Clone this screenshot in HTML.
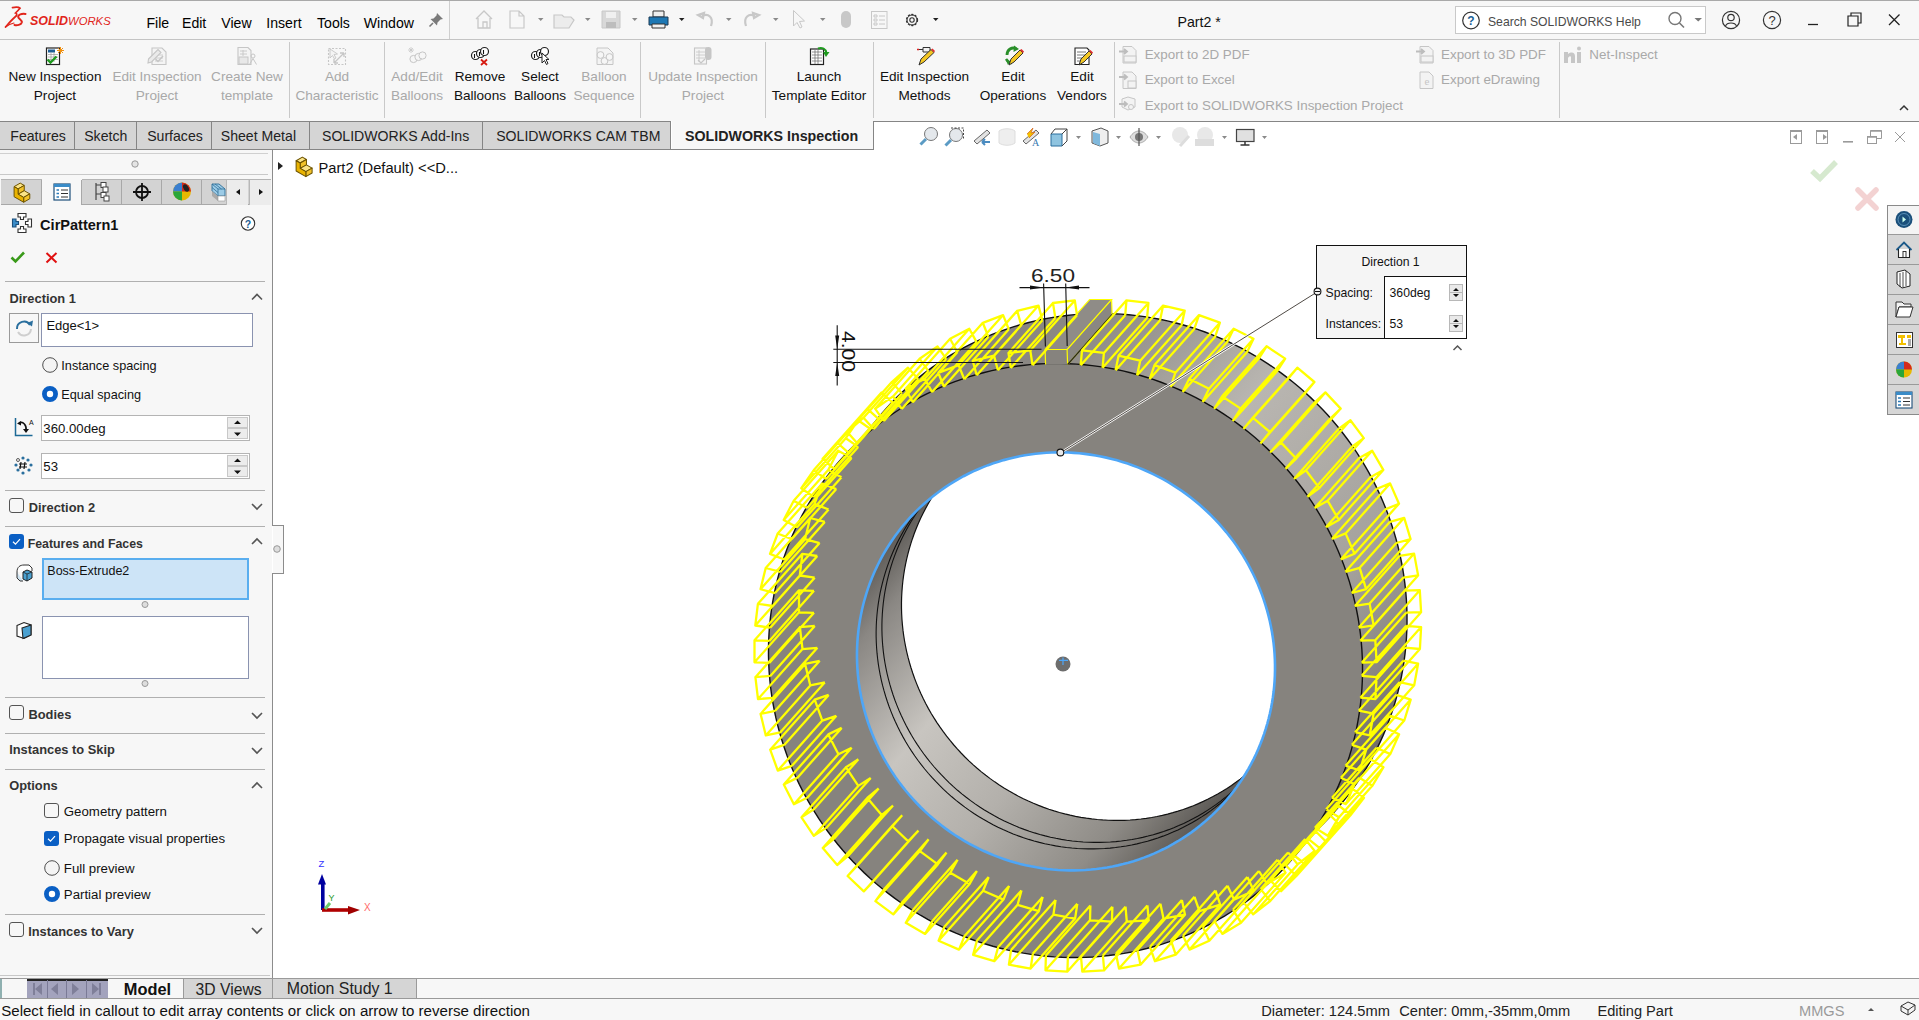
<!DOCTYPE html>
<html><head><meta charset="utf-8"><style>
html,body{margin:0;padding:0;}
body{width:1919px;height:1020px;overflow:hidden;position:relative;background:#fff;font-family:"Liberation Sans",sans-serif;}
.a{position:absolute;}
.t{position:absolute;white-space:nowrap;line-height:1;}
svg{display:block;}
</style></head><body>
<svg class="a" style="left:0;top:0" width="1919" height="1020" viewBox="0 0 1919 1020">
<defs>
<linearGradient id="gside" gradientUnits="userSpaceOnUse" x1="890" y1="413" x2="1332" y2="808"><stop offset="0" stop-color="#858280"/><stop offset="0.15" stop-color="#8c8984"/><stop offset="0.44" stop-color="#b9b6b1"/><stop offset="0.75" stop-color="#a5a29d"/><stop offset="0.9" stop-color="#8a8783"/><stop offset="1" stop-color="#6e6b67"/></linearGradient>
<linearGradient id="gin" gradientUnits="userSpaceOnUse" x1="925" y1="500" x2="1245" y2="770"><stop offset="0" stop-color="#5f5c58"/><stop offset="0.1" stop-color="#8a8783"/><stop offset="0.35" stop-color="#c8c5c0"/><stop offset="0.6" stop-color="#b3b0ab"/><stop offset="0.85" stop-color="#8f8c87"/><stop offset="1" stop-color="#5e5b57"/></linearGradient>

<clipPath id="inFrontInner"><path d="M1275.00,664.53 L1275.01,670.00 L1274.88,675.47 L1274.60,680.92 L1274.18,686.36 L1273.62,691.79 L1272.92,697.19 L1272.07,702.57 L1271.08,707.92 L1269.96,713.24 L1268.69,718.52 L1267.28,723.77 L1265.74,728.97 L1264.06,734.12 L1262.24,739.23 L1260.29,744.28 L1258.21,749.27 L1255.99,754.21 L1253.64,759.08 L1251.17,763.88 L1248.57,768.61 L1245.84,773.28 L1242.99,777.86 L1240.02,782.36 L1236.93,786.78 L1233.72,791.12 L1230.40,795.36 L1226.96,799.52 L1223.41,803.58 L1219.76,807.54 L1216.00,811.40 L1212.14,815.16 L1208.18,818.81 L1204.12,822.36 L1199.96,825.80 L1195.72,829.12 L1191.38,832.33 L1186.96,835.42 L1182.46,838.39 L1177.88,841.24 L1173.21,843.97 L1168.48,846.57 L1163.68,849.04 L1158.81,851.39 L1153.87,853.61 L1148.88,855.69 L1143.83,857.64 L1138.72,859.46 L1133.57,861.14 L1128.37,862.68 L1123.12,864.09 L1117.84,865.36 L1112.52,866.48 L1107.17,867.47 L1101.79,868.32 L1096.39,869.02 L1090.96,869.58 L1085.52,870.00 L1080.07,870.28 L1074.60,870.41 L1069.13,870.40 L1063.66,870.25 L1058.19,869.95 L1052.73,869.51 L1047.27,868.93 L1041.83,868.20 L1036.40,867.34 L1031.00,866.33 L1025.61,865.18 L1020.26,863.89 L1014.93,862.47 L1009.65,860.90 L1004.40,859.20 L999.19,857.37 L994.03,855.39 L988.92,853.29 L983.86,851.06 L978.85,848.69 L973.91,846.20 L969.03,843.58 L964.21,840.83 L959.47,837.96 L954.80,834.97 L950.20,831.87 L945.69,828.64 L941.26,825.30 L936.91,821.85 L932.65,818.29 L928.48,814.62 L924.41,810.85 L920.43,806.97 L916.55,802.99 L912.78,798.92 L909.11,794.75 L905.55,790.49 L902.10,786.14 L898.76,781.71 L895.53,777.20 L892.43,772.60 L889.44,767.93 L886.57,763.19 L883.82,758.37 L881.20,753.49 L878.71,748.55 L876.34,743.54 L874.11,738.48 L872.01,733.37 L870.03,728.21 L868.20,723.00 L866.50,717.75 L864.93,712.47 L863.51,707.14 L862.22,701.79 L861.07,696.40 L860.06,691.00 L859.20,685.57 L858.47,680.13 L857.89,674.67 L857.45,669.21 L857.15,663.74 L857.00,658.27 L856.99,652.80 L857.12,647.33 L857.40,641.88 L857.82,636.44 L858.38,631.01 L859.08,625.61 L859.93,620.23 L860.92,614.88 L862.04,609.56 L863.31,604.28 L864.72,599.03 L866.26,593.83 L867.94,588.68 L869.76,583.57 L871.71,578.52 L873.79,573.53 L876.01,568.59 L878.36,563.72 L880.83,558.92 L883.43,554.19 L886.16,549.52 L889.01,544.94 L891.98,540.44 L895.07,536.02 L898.28,531.68 L901.60,527.44 L905.04,523.28 L908.59,519.22 L912.24,515.26 L916.00,511.40 L919.86,507.64 L923.82,503.99 L927.88,500.44 L932.04,497.00 L936.28,493.68 L940.62,490.47 L945.04,487.38 L949.54,484.41 L954.12,481.56 L958.79,478.83 L963.52,476.23 L968.32,473.76 L973.19,471.41 L978.13,469.19 L983.12,467.11 L988.17,465.16 L993.28,463.34 L998.43,461.66 L1003.63,460.12 L1008.88,458.71 L1014.16,457.44 L1019.48,456.32 L1024.83,455.33 L1030.21,454.48 L1035.61,453.78 L1041.04,453.22 L1046.48,452.80 L1051.93,452.52 L1057.40,452.39 L1062.87,452.40 L1068.34,452.55 L1073.81,452.85 L1079.27,453.29 L1084.73,453.87 L1090.17,454.60 L1095.60,455.46 L1101.00,456.47 L1106.39,457.62 L1111.74,458.91 L1117.07,460.33 L1122.35,461.90 L1127.60,463.60 L1132.81,465.43 L1137.97,467.41 L1143.08,469.51 L1148.14,471.74 L1153.15,474.11 L1158.09,476.60 L1162.97,479.22 L1167.79,481.97 L1172.53,484.84 L1177.20,487.83 L1181.80,490.93 L1186.31,494.16 L1190.74,497.50 L1195.09,500.95 L1199.35,504.51 L1203.52,508.18 L1207.59,511.95 L1211.57,515.83 L1215.45,519.81 L1219.22,523.88 L1222.89,528.05 L1226.45,532.31 L1229.90,536.66 L1233.24,541.09 L1236.47,545.60 L1239.57,550.20 L1242.56,554.87 L1245.43,559.61 L1248.18,564.43 L1250.80,569.31 L1253.29,574.25 L1255.66,579.26 L1257.89,584.32 L1259.99,589.43 L1261.97,594.59 L1263.80,599.80 L1265.50,605.05 L1267.07,610.33 L1268.49,615.66 L1269.78,621.01 L1270.93,626.40 L1271.94,631.80 L1272.80,637.23 L1273.53,642.67 L1274.11,648.13 L1274.55,653.59 L1274.85,659.06 Z" /></clipPath>
</defs>
<path d="M841.0,459.3 L885.5,409.3 L1334.5,811.7 L1290.0,861.7 Z" fill="url(#gside)"/>
<path d="M1407.00,614.95 L1407.01,622.73 L1406.83,630.49 L1406.43,638.24 L1405.84,645.98 L1405.04,653.68 L1404.04,661.36 L1402.84,669.00 L1401.44,676.61 L1399.83,684.17 L1398.03,691.67 L1396.03,699.12 L1393.84,706.52 L1391.45,713.84 L1388.87,721.09 L1386.10,728.27 L1383.14,735.37 L1379.99,742.38 L1376.65,749.30 L1373.13,756.13 L1369.44,762.86 L1365.56,769.48 L1361.51,775.99 L1357.29,782.39 L1352.90,788.68 L1348.34,794.84 L1343.62,800.87 L1338.73,806.77 L1333.69,812.54 L1328.50,818.17 L1323.16,823.66 L1317.67,829.00 L1312.04,834.19 L1306.27,839.23 L1300.37,844.12 L1294.34,848.84 L1288.18,853.40 L1281.89,857.79 L1275.49,862.01 L1268.98,866.06 L1262.36,869.94 L1255.63,873.63 L1248.80,877.15 L1241.88,880.49 L1234.87,883.64 L1227.77,886.60 L1220.59,889.37 L1213.34,891.95 L1206.02,894.34 L1198.62,896.53 L1191.17,898.53 L1183.67,900.33 L1176.11,901.94 L1168.50,903.34 L1160.86,904.54 L1153.18,905.54 L1145.48,906.34 L1137.74,906.93 L1129.99,907.33 L1122.23,907.51 L1114.46,907.50 L1106.68,907.28 L1098.91,906.86 L1091.14,906.23 L1083.39,905.41 L1075.65,904.38 L1067.94,903.15 L1060.26,901.71 L1052.61,900.08 L1045.00,898.25 L1037.43,896.23 L1029.92,894.00 L1022.46,891.59 L1015.06,888.98 L1007.72,886.18 L1000.46,883.19 L993.27,880.01 L986.16,876.65 L979.13,873.11 L972.20,869.38 L965.36,865.48 L958.62,861.41 L951.98,857.16 L945.45,852.74 L939.03,848.16 L932.73,843.41 L926.55,838.51 L920.50,833.45 L914.58,828.23 L908.79,822.87 L903.14,817.36 L897.63,811.71 L892.27,805.92 L887.05,800.00 L881.99,793.95 L877.09,787.77 L872.34,781.47 L867.76,775.05 L863.34,768.52 L859.09,761.88 L855.02,755.14 L851.12,748.30 L847.39,741.37 L843.85,734.34 L840.49,727.23 L837.31,720.04 L834.32,712.78 L831.52,705.44 L828.91,698.04 L826.50,690.58 L824.27,683.07 L822.25,675.50 L820.42,667.89 L818.79,660.24 L817.35,652.56 L816.12,644.85 L815.09,637.11 L814.27,629.36 L813.64,621.59 L813.22,613.82 L813.00,606.05 L812.99,598.27 L813.17,590.51 L813.57,582.76 L814.16,575.02 L814.96,567.32 L815.96,559.64 L817.16,552.00 L818.56,544.39 L820.17,536.83 L821.97,529.33 L823.97,521.88 L826.16,514.48 L828.55,507.16 L831.13,499.91 L833.90,492.73 L836.86,485.63 L840.01,478.62 L843.35,471.70 L846.87,464.87 L850.56,458.14 L854.44,451.52 L858.49,445.01 L862.71,438.61 L867.10,432.32 L871.66,426.16 L876.38,420.13 L881.27,414.23 L886.31,408.46 L891.50,402.83 L896.84,397.34 L902.33,392.00 L907.96,386.81 L913.73,381.77 L919.63,376.88 L925.66,372.16 L931.82,367.60 L938.11,363.21 L944.51,358.99 L951.02,354.94 L957.64,351.06 L964.37,347.37 L971.20,343.85 L978.12,340.51 L985.13,337.36 L992.23,334.40 L999.41,331.63 L1006.66,329.05 L1013.98,326.66 L1021.38,324.47 L1028.83,322.47 L1036.33,320.67 L1043.89,319.06 L1051.50,317.66 L1059.14,316.46 L1066.82,315.46 L1074.52,314.66 L1082.26,314.07 L1090.01,313.67 L1097.77,313.49 L1105.55,313.50 L1113.32,313.72 L1121.09,314.14 L1128.86,314.77 L1136.61,315.59 L1144.35,316.62 L1152.06,317.85 L1159.74,319.29 L1167.39,320.92 L1175.00,322.75 L1182.57,324.77 L1190.08,327.00 L1197.54,329.41 L1204.94,332.02 L1212.28,334.82 L1219.54,337.81 L1226.73,340.99 L1233.84,344.35 L1240.87,347.89 L1247.80,351.62 L1254.64,355.52 L1261.38,359.59 L1268.02,363.84 L1274.55,368.26 L1280.97,372.84 L1287.27,377.59 L1293.45,382.49 L1299.50,387.55 L1305.42,392.77 L1311.21,398.13 L1316.86,403.64 L1322.37,409.29 L1327.73,415.08 L1332.95,421.00 L1338.01,427.05 L1342.91,433.23 L1347.66,439.53 L1352.24,445.95 L1356.66,452.48 L1360.91,459.12 L1364.98,465.86 L1368.88,472.70 L1372.61,479.63 L1376.15,486.66 L1379.51,493.77 L1382.69,500.96 L1385.68,508.22 L1388.48,515.56 L1391.09,522.96 L1393.50,530.42 L1395.73,537.93 L1397.75,545.50 L1399.58,553.11 L1401.21,560.76 L1402.65,568.44 L1403.88,576.15 L1404.91,583.89 L1405.73,591.64 L1406.36,599.41 L1406.78,607.18 Z" fill="url(#gside)" stroke="#111" stroke-width="1.4"/>
<path d="M1362.50,664.95 L1362.51,672.73 L1362.33,680.49 L1361.93,688.24 L1361.34,695.98 L1360.54,703.68 L1359.54,711.36 L1358.34,719.00 L1356.94,726.61 L1355.33,734.17 L1353.53,741.67 L1351.53,749.12 L1349.34,756.52 L1346.95,763.84 L1344.37,771.09 L1341.60,778.27 L1338.64,785.37 L1335.49,792.38 L1332.15,799.30 L1328.63,806.13 L1324.94,812.86 L1321.06,819.48 L1317.01,825.99 L1312.79,832.39 L1308.40,838.68 L1303.84,844.84 L1299.12,850.87 L1294.23,856.77 L1289.19,862.54 L1284.00,868.17 L1278.66,873.66 L1273.17,879.00 L1267.54,884.19 L1261.77,889.23 L1255.87,894.12 L1249.84,898.84 L1243.68,903.40 L1237.39,907.79 L1230.99,912.01 L1224.48,916.06 L1217.86,919.94 L1211.13,923.63 L1204.30,927.15 L1197.38,930.49 L1190.37,933.64 L1183.27,936.60 L1176.09,939.37 L1168.84,941.95 L1161.52,944.34 L1154.12,946.53 L1146.67,948.53 L1139.17,950.33 L1131.61,951.94 L1124.00,953.34 L1116.36,954.54 L1108.68,955.54 L1100.98,956.34 L1093.24,956.93 L1085.49,957.33 L1077.73,957.51 L1069.96,957.50 L1062.18,957.28 L1054.41,956.86 L1046.64,956.23 L1038.89,955.41 L1031.15,954.38 L1023.44,953.15 L1015.76,951.71 L1008.11,950.08 L1000.50,948.25 L992.93,946.23 L985.42,944.00 L977.96,941.59 L970.56,938.98 L963.22,936.18 L955.96,933.19 L948.77,930.01 L941.66,926.65 L934.63,923.11 L927.70,919.38 L920.86,915.48 L914.12,911.41 L907.48,907.16 L900.95,902.74 L894.53,898.16 L888.23,893.41 L882.05,888.51 L876.00,883.45 L870.08,878.23 L864.29,872.87 L858.64,867.36 L853.13,861.71 L847.77,855.92 L842.55,850.00 L837.49,843.95 L832.59,837.77 L827.84,831.47 L823.26,825.05 L818.84,818.52 L814.59,811.88 L810.52,805.14 L806.62,798.30 L802.89,791.37 L799.35,784.34 L795.99,777.23 L792.81,770.04 L789.82,762.78 L787.02,755.44 L784.41,748.04 L782.00,740.58 L779.77,733.07 L777.75,725.50 L775.92,717.89 L774.29,710.24 L772.85,702.56 L771.62,694.85 L770.59,687.11 L769.77,679.36 L769.14,671.59 L768.72,663.82 L768.50,656.05 L768.49,648.27 L768.67,640.51 L769.07,632.76 L769.66,625.02 L770.46,617.32 L771.46,609.64 L772.66,602.00 L774.06,594.39 L775.67,586.83 L777.47,579.33 L779.47,571.88 L781.66,564.48 L784.05,557.16 L786.63,549.91 L789.40,542.73 L792.36,535.63 L795.51,528.62 L798.85,521.70 L802.37,514.87 L806.06,508.14 L809.94,501.52 L813.99,495.01 L818.21,488.61 L822.60,482.32 L827.16,476.16 L831.88,470.13 L836.77,464.23 L841.81,458.46 L847.00,452.83 L852.34,447.34 L857.83,442.00 L863.46,436.81 L869.23,431.77 L875.13,426.88 L881.16,422.16 L887.32,417.60 L893.61,413.21 L900.01,408.99 L906.52,404.94 L913.14,401.06 L919.87,397.37 L926.70,393.85 L933.62,390.51 L940.63,387.36 L947.73,384.40 L954.91,381.63 L962.16,379.05 L969.48,376.66 L976.88,374.47 L984.33,372.47 L991.83,370.67 L999.39,369.06 L1007.00,367.66 L1014.64,366.46 L1022.32,365.46 L1030.02,364.66 L1037.76,364.07 L1045.51,363.67 L1053.27,363.49 L1061.05,363.50 L1068.82,363.72 L1076.59,364.14 L1084.36,364.77 L1092.11,365.59 L1099.85,366.62 L1107.56,367.85 L1115.24,369.29 L1122.89,370.92 L1130.50,372.75 L1138.07,374.77 L1145.58,377.00 L1153.04,379.41 L1160.44,382.02 L1167.78,384.82 L1175.04,387.81 L1182.23,390.99 L1189.34,394.35 L1196.37,397.89 L1203.30,401.62 L1210.14,405.52 L1216.88,409.59 L1223.52,413.84 L1230.05,418.26 L1236.47,422.84 L1242.77,427.59 L1248.95,432.49 L1255.00,437.55 L1260.92,442.77 L1266.71,448.13 L1272.36,453.64 L1277.87,459.29 L1283.23,465.08 L1288.45,471.00 L1293.51,477.05 L1298.41,483.23 L1303.16,489.53 L1307.74,495.95 L1312.16,502.48 L1316.41,509.12 L1320.48,515.86 L1324.38,522.70 L1328.11,529.63 L1331.65,536.66 L1335.01,543.77 L1338.19,550.96 L1341.18,558.22 L1343.98,565.56 L1346.59,572.96 L1349.00,580.42 L1351.23,587.93 L1353.25,595.50 L1355.08,603.11 L1356.71,610.76 L1358.15,618.44 L1359.38,626.15 L1360.41,633.89 L1361.23,641.64 L1361.86,649.41 L1362.28,657.18 Z" fill="#86837e" stroke="#111" stroke-width="1.4"/>
<g clip-path="url(#inFrontInner)"><path d="M1275.00,664.53 L1275.01,670.00 L1274.88,675.47 L1274.60,680.92 L1274.18,686.36 L1273.62,691.79 L1272.92,697.19 L1272.07,702.57 L1271.08,707.92 L1269.96,713.24 L1268.69,718.52 L1267.28,723.77 L1265.74,728.97 L1264.06,734.12 L1262.24,739.23 L1260.29,744.28 L1258.21,749.27 L1255.99,754.21 L1253.64,759.08 L1251.17,763.88 L1248.57,768.61 L1245.84,773.28 L1242.99,777.86 L1240.02,782.36 L1236.93,786.78 L1233.72,791.12 L1230.40,795.36 L1226.96,799.52 L1223.41,803.58 L1219.76,807.54 L1216.00,811.40 L1212.14,815.16 L1208.18,818.81 L1204.12,822.36 L1199.96,825.80 L1195.72,829.12 L1191.38,832.33 L1186.96,835.42 L1182.46,838.39 L1177.88,841.24 L1173.21,843.97 L1168.48,846.57 L1163.68,849.04 L1158.81,851.39 L1153.87,853.61 L1148.88,855.69 L1143.83,857.64 L1138.72,859.46 L1133.57,861.14 L1128.37,862.68 L1123.12,864.09 L1117.84,865.36 L1112.52,866.48 L1107.17,867.47 L1101.79,868.32 L1096.39,869.02 L1090.96,869.58 L1085.52,870.00 L1080.07,870.28 L1074.60,870.41 L1069.13,870.40 L1063.66,870.25 L1058.19,869.95 L1052.73,869.51 L1047.27,868.93 L1041.83,868.20 L1036.40,867.34 L1031.00,866.33 L1025.61,865.18 L1020.26,863.89 L1014.93,862.47 L1009.65,860.90 L1004.40,859.20 L999.19,857.37 L994.03,855.39 L988.92,853.29 L983.86,851.06 L978.85,848.69 L973.91,846.20 L969.03,843.58 L964.21,840.83 L959.47,837.96 L954.80,834.97 L950.20,831.87 L945.69,828.64 L941.26,825.30 L936.91,821.85 L932.65,818.29 L928.48,814.62 L924.41,810.85 L920.43,806.97 L916.55,802.99 L912.78,798.92 L909.11,794.75 L905.55,790.49 L902.10,786.14 L898.76,781.71 L895.53,777.20 L892.43,772.60 L889.44,767.93 L886.57,763.19 L883.82,758.37 L881.20,753.49 L878.71,748.55 L876.34,743.54 L874.11,738.48 L872.01,733.37 L870.03,728.21 L868.20,723.00 L866.50,717.75 L864.93,712.47 L863.51,707.14 L862.22,701.79 L861.07,696.40 L860.06,691.00 L859.20,685.57 L858.47,680.13 L857.89,674.67 L857.45,669.21 L857.15,663.74 L857.00,658.27 L856.99,652.80 L857.12,647.33 L857.40,641.88 L857.82,636.44 L858.38,631.01 L859.08,625.61 L859.93,620.23 L860.92,614.88 L862.04,609.56 L863.31,604.28 L864.72,599.03 L866.26,593.83 L867.94,588.68 L869.76,583.57 L871.71,578.52 L873.79,573.53 L876.01,568.59 L878.36,563.72 L880.83,558.92 L883.43,554.19 L886.16,549.52 L889.01,544.94 L891.98,540.44 L895.07,536.02 L898.28,531.68 L901.60,527.44 L905.04,523.28 L908.59,519.22 L912.24,515.26 L916.00,511.40 L919.86,507.64 L923.82,503.99 L927.88,500.44 L932.04,497.00 L936.28,493.68 L940.62,490.47 L945.04,487.38 L949.54,484.41 L954.12,481.56 L958.79,478.83 L963.52,476.23 L968.32,473.76 L973.19,471.41 L978.13,469.19 L983.12,467.11 L988.17,465.16 L993.28,463.34 L998.43,461.66 L1003.63,460.12 L1008.88,458.71 L1014.16,457.44 L1019.48,456.32 L1024.83,455.33 L1030.21,454.48 L1035.61,453.78 L1041.04,453.22 L1046.48,452.80 L1051.93,452.52 L1057.40,452.39 L1062.87,452.40 L1068.34,452.55 L1073.81,452.85 L1079.27,453.29 L1084.73,453.87 L1090.17,454.60 L1095.60,455.46 L1101.00,456.47 L1106.39,457.62 L1111.74,458.91 L1117.07,460.33 L1122.35,461.90 L1127.60,463.60 L1132.81,465.43 L1137.97,467.41 L1143.08,469.51 L1148.14,471.74 L1153.15,474.11 L1158.09,476.60 L1162.97,479.22 L1167.79,481.97 L1172.53,484.84 L1177.20,487.83 L1181.80,490.93 L1186.31,494.16 L1190.74,497.50 L1195.09,500.95 L1199.35,504.51 L1203.52,508.18 L1207.59,511.95 L1211.57,515.83 L1215.45,519.81 L1219.22,523.88 L1222.89,528.05 L1226.45,532.31 L1229.90,536.66 L1233.24,541.09 L1236.47,545.60 L1239.57,550.20 L1242.56,554.87 L1245.43,559.61 L1248.18,564.43 L1250.80,569.31 L1253.29,574.25 L1255.66,579.26 L1257.89,584.32 L1259.99,589.43 L1261.97,594.59 L1263.80,599.80 L1265.50,605.05 L1267.07,610.33 L1268.49,615.66 L1269.78,621.01 L1270.93,626.40 L1271.94,631.80 L1272.80,637.23 L1273.53,642.67 L1274.11,648.13 L1274.55,653.59 L1274.85,659.06 Z" fill="url(#gin)"/>
<path d="M1294.13,643.03 L1294.15,648.50 L1294.01,653.97 L1293.74,659.42 L1293.32,664.86 L1292.76,670.29 L1292.05,675.69 L1291.21,681.07 L1290.22,686.42 L1289.09,691.74 L1287.82,697.02 L1286.42,702.27 L1284.87,707.47 L1283.19,712.62 L1281.38,717.73 L1279.43,722.78 L1277.34,727.77 L1275.12,732.71 L1272.78,737.58 L1270.30,742.38 L1267.70,747.11 L1264.97,751.78 L1262.12,756.36 L1259.15,760.86 L1256.06,765.28 L1252.85,769.62 L1249.53,773.86 L1246.10,778.02 L1242.55,782.08 L1238.90,786.04 L1235.14,789.90 L1231.28,793.66 L1227.31,797.31 L1223.25,800.86 L1219.10,804.30 L1214.85,807.62 L1210.52,810.83 L1206.10,813.92 L1201.59,816.89 L1197.01,819.74 L1192.35,822.47 L1187.62,825.07 L1182.81,827.54 L1177.94,829.89 L1173.01,832.11 L1168.01,834.19 L1162.96,836.14 L1157.86,837.96 L1152.70,839.64 L1147.50,841.18 L1142.26,842.59 L1136.97,843.86 L1131.66,844.98 L1126.30,845.97 L1120.93,846.82 L1115.52,847.52 L1110.10,848.08 L1104.66,848.50 L1099.20,848.78 L1093.74,848.91 L1088.27,848.90 L1082.80,848.75 L1077.33,848.45 L1071.86,848.01 L1066.41,847.43 L1060.96,846.70 L1055.54,845.84 L1050.13,844.83 L1044.75,843.68 L1039.39,842.39 L1034.07,840.97 L1028.78,839.40 L1023.53,837.70 L1018.32,835.87 L1013.16,833.89 L1008.05,831.79 L1002.99,829.56 L997.99,827.19 L993.04,824.70 L988.16,822.08 L983.35,819.33 L978.61,816.46 L973.93,813.47 L969.34,810.37 L964.82,807.14 L960.39,803.80 L956.04,800.35 L951.78,796.79 L947.62,793.12 L943.54,789.35 L939.57,785.47 L935.69,781.49 L931.92,777.42 L928.25,773.25 L924.68,768.99 L921.23,764.64 L917.89,760.21 L914.67,755.70 L911.56,751.10 L908.57,746.43 L905.70,741.69 L902.96,736.87 L900.34,731.99 L897.84,727.05 L895.48,722.04 L893.24,716.98 L891.14,711.87 L889.17,706.71 L887.33,701.50 L885.63,696.25 L884.07,690.97 L882.64,685.64 L881.35,680.29 L880.21,674.90 L879.20,669.50 L878.33,664.07 L877.61,658.63 L877.03,653.17 L876.59,647.71 L876.29,642.24 L876.13,636.77 L876.12,631.30 L876.26,625.83 L876.53,620.38 L876.95,614.94 L877.51,609.51 L878.22,604.11 L879.06,598.73 L880.05,593.38 L881.18,588.06 L882.45,582.78 L883.85,577.53 L885.40,572.33 L887.08,567.18 L888.89,562.07 L890.84,557.02 L892.93,552.03 L895.15,547.09 L897.49,542.22 L899.97,537.42 L902.57,532.69 L905.30,528.02 L908.15,523.44 L911.12,518.94 L914.21,514.52 L917.42,510.18 L920.74,505.94 L924.17,501.78 L927.72,497.72 L931.37,493.76 L935.13,489.90 L938.99,486.14 L942.96,482.49 L947.02,478.94 L951.17,475.50 L955.42,472.18 L959.75,468.97 L964.17,465.88 L968.68,462.91 L973.26,460.06 L977.92,457.33 L982.65,454.73 L987.46,452.26 L992.33,449.91 L997.26,447.69 L1002.26,445.61 L1007.31,443.66 L1012.41,441.84 L1017.57,440.16 L1022.77,438.62 L1028.01,437.21 L1033.30,435.94 L1038.61,434.82 L1043.97,433.83 L1049.34,432.98 L1054.75,432.28 L1060.17,431.72 L1065.61,431.30 L1071.07,431.02 L1076.53,430.89 L1082.00,430.90 L1087.47,431.05 L1092.94,431.35 L1098.41,431.79 L1103.86,432.37 L1109.31,433.10 L1114.73,433.96 L1120.14,434.97 L1125.52,436.12 L1130.88,437.41 L1136.20,438.83 L1141.49,440.40 L1146.74,442.10 L1151.95,443.93 L1157.11,445.91 L1162.22,448.01 L1167.28,450.24 L1172.28,452.61 L1177.23,455.10 L1182.11,457.72 L1186.92,460.47 L1191.66,463.34 L1196.34,466.33 L1200.93,469.43 L1205.45,472.66 L1209.88,476.00 L1214.23,479.45 L1218.49,483.01 L1222.65,486.68 L1226.73,490.45 L1230.70,494.33 L1234.58,498.31 L1238.35,502.38 L1242.02,506.55 L1245.59,510.81 L1249.04,515.16 L1252.38,519.59 L1255.60,524.10 L1258.71,528.70 L1261.70,533.37 L1264.57,538.11 L1267.31,542.93 L1269.93,547.81 L1272.43,552.75 L1274.79,557.76 L1277.03,562.82 L1279.13,567.93 L1281.10,573.09 L1282.94,578.30 L1284.64,583.55 L1286.20,588.83 L1287.63,594.16 L1288.92,599.51 L1290.06,604.90 L1291.07,610.30 L1291.94,615.73 L1292.66,621.17 L1293.24,626.63 L1293.68,632.09 L1293.98,637.56 Z" fill="none" stroke="#111" stroke-width="1.1"/>
<path d="M1299.92,636.53 L1299.93,642.00 L1299.80,647.47 L1299.52,652.92 L1299.10,658.36 L1298.54,663.79 L1297.84,669.19 L1296.99,674.57 L1296.00,679.92 L1294.88,685.24 L1293.61,690.52 L1292.20,695.77 L1290.66,700.97 L1288.98,706.12 L1287.16,711.23 L1285.21,716.28 L1283.13,721.27 L1280.91,726.21 L1278.56,731.08 L1276.09,735.88 L1273.49,740.61 L1270.76,745.28 L1267.91,749.86 L1264.94,754.36 L1261.85,758.78 L1258.64,763.12 L1255.32,767.36 L1251.88,771.52 L1248.33,775.58 L1244.68,779.54 L1240.92,783.40 L1237.06,787.16 L1233.10,790.81 L1229.04,794.36 L1224.88,797.80 L1220.64,801.12 L1216.30,804.33 L1211.88,807.42 L1207.38,810.39 L1202.80,813.24 L1198.13,815.97 L1193.40,818.57 L1188.60,821.04 L1183.73,823.39 L1178.79,825.61 L1173.80,827.69 L1168.75,829.64 L1163.64,831.46 L1158.49,833.14 L1153.29,834.68 L1148.04,836.09 L1142.76,837.36 L1137.44,838.48 L1132.09,839.47 L1126.71,840.32 L1121.31,841.02 L1115.88,841.58 L1110.44,842.00 L1104.99,842.28 L1099.52,842.41 L1094.06,842.40 L1088.58,842.25 L1083.11,841.95 L1077.65,841.51 L1072.19,840.93 L1066.75,840.20 L1061.32,839.34 L1055.92,838.33 L1050.53,837.18 L1045.18,835.89 L1039.85,834.47 L1034.57,832.90 L1029.32,831.20 L1024.11,829.37 L1018.95,827.39 L1013.84,825.29 L1008.78,823.06 L1003.77,820.69 L998.83,818.20 L993.95,815.58 L989.13,812.83 L984.39,809.96 L979.72,806.97 L975.12,803.87 L970.61,800.64 L966.18,797.30 L961.83,793.85 L957.57,790.29 L953.40,786.62 L949.33,782.85 L945.35,778.97 L941.47,774.99 L937.70,770.92 L934.03,766.75 L930.47,762.49 L927.02,758.14 L923.68,753.71 L920.45,749.20 L917.35,744.60 L914.36,739.93 L911.49,735.19 L908.74,730.37 L906.12,725.49 L903.63,720.55 L901.26,715.54 L899.03,710.48 L896.93,705.37 L894.95,700.21 L893.12,695.00 L891.42,689.75 L889.85,684.47 L888.43,679.14 L887.14,673.79 L885.99,668.40 L884.98,663.00 L884.12,657.57 L883.39,652.13 L882.81,646.67 L882.37,641.21 L882.07,635.74 L881.92,630.27 L881.91,624.80 L882.04,619.33 L882.32,613.88 L882.74,608.44 L883.30,603.01 L884.00,597.61 L884.85,592.23 L885.84,586.88 L886.96,581.56 L888.23,576.28 L889.64,571.03 L891.18,565.83 L892.86,560.68 L894.68,555.57 L896.63,550.52 L898.71,545.53 L900.93,540.59 L903.28,535.72 L905.75,530.92 L908.35,526.19 L911.08,521.52 L913.93,516.94 L916.90,512.44 L919.99,508.02 L923.20,503.68 L926.52,499.44 L929.96,495.28 L933.51,491.22 L937.16,487.26 L940.92,483.40 L944.78,479.64 L948.74,475.99 L952.80,472.44 L956.96,469.00 L961.20,465.68 L965.54,462.47 L969.96,459.38 L974.46,456.41 L979.04,453.56 L983.71,450.83 L988.44,448.23 L993.24,445.76 L998.11,443.41 L1003.05,441.19 L1008.04,439.11 L1013.09,437.16 L1018.20,435.34 L1023.35,433.66 L1028.55,432.12 L1033.80,430.71 L1039.08,429.44 L1044.40,428.32 L1049.75,427.33 L1055.13,426.48 L1060.53,425.78 L1065.96,425.22 L1071.40,424.80 L1076.85,424.52 L1082.32,424.39 L1087.79,424.40 L1093.26,424.55 L1098.73,424.85 L1104.19,425.29 L1109.65,425.87 L1115.09,426.60 L1120.52,427.46 L1125.92,428.47 L1131.31,429.62 L1136.66,430.91 L1141.99,432.33 L1147.27,433.90 L1152.52,435.60 L1157.73,437.43 L1162.89,439.41 L1168.00,441.51 L1173.06,443.74 L1178.07,446.11 L1183.01,448.60 L1187.89,451.22 L1192.71,453.97 L1197.45,456.84 L1202.12,459.83 L1206.72,462.93 L1211.23,466.16 L1215.66,469.50 L1220.01,472.95 L1224.27,476.51 L1228.44,480.18 L1232.51,483.95 L1236.49,487.83 L1240.37,491.81 L1244.14,495.88 L1247.81,500.05 L1251.37,504.31 L1254.82,508.66 L1258.16,513.09 L1261.39,517.60 L1264.49,522.20 L1267.48,526.87 L1270.35,531.61 L1273.10,536.43 L1275.72,541.31 L1278.21,546.25 L1280.58,551.26 L1282.81,556.32 L1284.91,561.43 L1286.89,566.59 L1288.72,571.80 L1290.42,577.05 L1291.99,582.33 L1293.41,587.66 L1294.70,593.01 L1295.85,598.40 L1296.86,603.80 L1297.72,609.23 L1298.45,614.67 L1299.03,620.13 L1299.47,625.59 L1299.77,631.06 Z" fill="none" stroke="#111" stroke-width="1.1"/>
<path d="M1319.50,614.53 L1319.51,620.00 L1319.38,625.47 L1319.10,630.92 L1318.68,636.36 L1318.12,641.79 L1317.42,647.19 L1316.57,652.57 L1315.58,657.92 L1314.46,663.24 L1313.19,668.52 L1311.78,673.77 L1310.24,678.97 L1308.56,684.12 L1306.74,689.23 L1304.79,694.28 L1302.71,699.27 L1300.49,704.21 L1298.14,709.08 L1295.67,713.88 L1293.07,718.61 L1290.34,723.28 L1287.49,727.86 L1284.52,732.36 L1281.43,736.78 L1278.22,741.12 L1274.90,745.36 L1271.46,749.52 L1267.91,753.58 L1264.26,757.54 L1260.50,761.40 L1256.64,765.16 L1252.68,768.81 L1248.62,772.36 L1244.46,775.80 L1240.22,779.12 L1235.88,782.33 L1231.46,785.42 L1226.96,788.39 L1222.38,791.24 L1217.71,793.97 L1212.98,796.57 L1208.18,799.04 L1203.31,801.39 L1198.37,803.61 L1193.38,805.69 L1188.33,807.64 L1183.22,809.46 L1178.07,811.14 L1172.87,812.68 L1167.62,814.09 L1162.34,815.36 L1157.02,816.48 L1151.67,817.47 L1146.29,818.32 L1140.89,819.02 L1135.46,819.58 L1130.02,820.00 L1124.57,820.28 L1119.10,820.41 L1113.63,820.40 L1108.16,820.25 L1102.69,819.95 L1097.23,819.51 L1091.77,818.93 L1086.33,818.20 L1080.90,817.34 L1075.50,816.33 L1070.11,815.18 L1064.76,813.89 L1059.43,812.47 L1054.15,810.90 L1048.90,809.20 L1043.69,807.37 L1038.53,805.39 L1033.42,803.29 L1028.36,801.06 L1023.35,798.69 L1018.41,796.20 L1013.53,793.58 L1008.71,790.83 L1003.97,787.96 L999.30,784.97 L994.70,781.87 L990.19,778.64 L985.76,775.30 L981.41,771.85 L977.15,768.29 L972.98,764.62 L968.91,760.85 L964.93,756.97 L961.05,752.99 L957.28,748.92 L953.61,744.75 L950.05,740.49 L946.60,736.14 L943.26,731.71 L940.03,727.20 L936.93,722.60 L933.94,717.93 L931.07,713.19 L928.32,708.37 L925.70,703.49 L923.21,698.55 L920.84,693.54 L918.61,688.48 L916.51,683.37 L914.53,678.21 L912.70,673.00 L911.00,667.75 L909.43,662.47 L908.01,657.14 L906.72,651.79 L905.57,646.40 L904.56,641.00 L903.70,635.57 L902.97,630.13 L902.39,624.67 L901.95,619.21 L901.65,613.74 L901.50,608.27 L901.49,602.80 L901.62,597.33 L901.90,591.88 L902.32,586.44 L902.88,581.01 L903.58,575.61 L904.43,570.23 L905.42,564.88 L906.54,559.56 L907.81,554.28 L909.22,549.03 L910.76,543.83 L912.44,538.68 L914.26,533.57 L916.21,528.52 L918.29,523.53 L920.51,518.59 L922.86,513.72 L925.33,508.92 L927.93,504.19 L930.66,499.52 L933.51,494.94 L936.48,490.44 L939.57,486.02 L942.78,481.68 L946.10,477.44 L949.54,473.28 L953.09,469.22 L956.74,465.26 L960.50,461.40 L964.36,457.64 L968.32,453.99 L972.38,450.44 L976.54,447.00 L980.78,443.68 L985.12,440.47 L989.54,437.38 L994.04,434.41 L998.62,431.56 L1003.29,428.83 L1008.02,426.23 L1012.82,423.76 L1017.69,421.41 L1022.63,419.19 L1027.62,417.11 L1032.67,415.16 L1037.78,413.34 L1042.93,411.66 L1048.13,410.12 L1053.38,408.71 L1058.66,407.44 L1063.98,406.32 L1069.33,405.33 L1074.71,404.48 L1080.11,403.78 L1085.54,403.22 L1090.98,402.80 L1096.43,402.52 L1101.90,402.39 L1107.37,402.40 L1112.84,402.55 L1118.31,402.85 L1123.77,403.29 L1129.23,403.87 L1134.67,404.60 L1140.10,405.46 L1145.50,406.47 L1150.89,407.62 L1156.24,408.91 L1161.57,410.33 L1166.85,411.90 L1172.10,413.60 L1177.31,415.43 L1182.47,417.41 L1187.58,419.51 L1192.64,421.74 L1197.65,424.11 L1202.59,426.60 L1207.47,429.22 L1212.29,431.97 L1217.03,434.84 L1221.70,437.83 L1226.30,440.93 L1230.81,444.16 L1235.24,447.50 L1239.59,450.95 L1243.85,454.51 L1248.02,458.18 L1252.09,461.95 L1256.07,465.83 L1259.95,469.81 L1263.72,473.88 L1267.39,478.05 L1270.95,482.31 L1274.40,486.66 L1277.74,491.09 L1280.97,495.60 L1284.07,500.20 L1287.06,504.87 L1289.93,509.61 L1292.68,514.43 L1295.30,519.31 L1297.79,524.25 L1300.16,529.26 L1302.39,534.32 L1304.49,539.43 L1306.47,544.59 L1308.30,549.80 L1310.00,555.05 L1311.57,560.33 L1312.99,565.66 L1314.28,571.01 L1315.43,576.40 L1316.44,581.80 L1317.30,587.23 L1318.03,592.67 L1318.61,598.13 L1319.05,603.59 L1319.35,609.06 Z" fill="#fff" stroke="#111" stroke-width="1.2"/></g>
<path d="M1275.00,664.53 L1275.01,670.00 L1274.88,675.47 L1274.60,680.92 L1274.18,686.36 L1273.62,691.79 L1272.92,697.19 L1272.07,702.57 L1271.08,707.92 L1269.96,713.24 L1268.69,718.52 L1267.28,723.77 L1265.74,728.97 L1264.06,734.12 L1262.24,739.23 L1260.29,744.28 L1258.21,749.27 L1255.99,754.21 L1253.64,759.08 L1251.17,763.88 L1248.57,768.61 L1245.84,773.28 L1242.99,777.86 L1240.02,782.36 L1236.93,786.78 L1233.72,791.12 L1230.40,795.36 L1226.96,799.52 L1223.41,803.58 L1219.76,807.54 L1216.00,811.40 L1212.14,815.16 L1208.18,818.81 L1204.12,822.36 L1199.96,825.80 L1195.72,829.12 L1191.38,832.33 L1186.96,835.42 L1182.46,838.39 L1177.88,841.24 L1173.21,843.97 L1168.48,846.57 L1163.68,849.04 L1158.81,851.39 L1153.87,853.61 L1148.88,855.69 L1143.83,857.64 L1138.72,859.46 L1133.57,861.14 L1128.37,862.68 L1123.12,864.09 L1117.84,865.36 L1112.52,866.48 L1107.17,867.47 L1101.79,868.32 L1096.39,869.02 L1090.96,869.58 L1085.52,870.00 L1080.07,870.28 L1074.60,870.41 L1069.13,870.40 L1063.66,870.25 L1058.19,869.95 L1052.73,869.51 L1047.27,868.93 L1041.83,868.20 L1036.40,867.34 L1031.00,866.33 L1025.61,865.18 L1020.26,863.89 L1014.93,862.47 L1009.65,860.90 L1004.40,859.20 L999.19,857.37 L994.03,855.39 L988.92,853.29 L983.86,851.06 L978.85,848.69 L973.91,846.20 L969.03,843.58 L964.21,840.83 L959.47,837.96 L954.80,834.97 L950.20,831.87 L945.69,828.64 L941.26,825.30 L936.91,821.85 L932.65,818.29 L928.48,814.62 L924.41,810.85 L920.43,806.97 L916.55,802.99 L912.78,798.92 L909.11,794.75 L905.55,790.49 L902.10,786.14 L898.76,781.71 L895.53,777.20 L892.43,772.60 L889.44,767.93 L886.57,763.19 L883.82,758.37 L881.20,753.49 L878.71,748.55 L876.34,743.54 L874.11,738.48 L872.01,733.37 L870.03,728.21 L868.20,723.00 L866.50,717.75 L864.93,712.47 L863.51,707.14 L862.22,701.79 L861.07,696.40 L860.06,691.00 L859.20,685.57 L858.47,680.13 L857.89,674.67 L857.45,669.21 L857.15,663.74 L857.00,658.27 L856.99,652.80 L857.12,647.33 L857.40,641.88 L857.82,636.44 L858.38,631.01 L859.08,625.61 L859.93,620.23 L860.92,614.88 L862.04,609.56 L863.31,604.28 L864.72,599.03 L866.26,593.83 L867.94,588.68 L869.76,583.57 L871.71,578.52 L873.79,573.53 L876.01,568.59 L878.36,563.72 L880.83,558.92 L883.43,554.19 L886.16,549.52 L889.01,544.94 L891.98,540.44 L895.07,536.02 L898.28,531.68 L901.60,527.44 L905.04,523.28 L908.59,519.22 L912.24,515.26 L916.00,511.40 L919.86,507.64 L923.82,503.99 L927.88,500.44 L932.04,497.00 L936.28,493.68 L940.62,490.47 L945.04,487.38 L949.54,484.41 L954.12,481.56 L958.79,478.83 L963.52,476.23 L968.32,473.76 L973.19,471.41 L978.13,469.19 L983.12,467.11 L988.17,465.16 L993.28,463.34 L998.43,461.66 L1003.63,460.12 L1008.88,458.71 L1014.16,457.44 L1019.48,456.32 L1024.83,455.33 L1030.21,454.48 L1035.61,453.78 L1041.04,453.22 L1046.48,452.80 L1051.93,452.52 L1057.40,452.39 L1062.87,452.40 L1068.34,452.55 L1073.81,452.85 L1079.27,453.29 L1084.73,453.87 L1090.17,454.60 L1095.60,455.46 L1101.00,456.47 L1106.39,457.62 L1111.74,458.91 L1117.07,460.33 L1122.35,461.90 L1127.60,463.60 L1132.81,465.43 L1137.97,467.41 L1143.08,469.51 L1148.14,471.74 L1153.15,474.11 L1158.09,476.60 L1162.97,479.22 L1167.79,481.97 L1172.53,484.84 L1177.20,487.83 L1181.80,490.93 L1186.31,494.16 L1190.74,497.50 L1195.09,500.95 L1199.35,504.51 L1203.52,508.18 L1207.59,511.95 L1211.57,515.83 L1215.45,519.81 L1219.22,523.88 L1222.89,528.05 L1226.45,532.31 L1229.90,536.66 L1233.24,541.09 L1236.47,545.60 L1239.57,550.20 L1242.56,554.87 L1245.43,559.61 L1248.18,564.43 L1250.80,569.31 L1253.29,574.25 L1255.66,579.26 L1257.89,584.32 L1259.99,589.43 L1261.97,594.59 L1263.80,599.80 L1265.50,605.05 L1267.07,610.33 L1268.49,615.66 L1269.78,621.01 L1270.93,626.40 L1271.94,631.80 L1272.80,637.23 L1273.53,642.67 L1274.11,648.13 L1274.55,653.59 L1274.85,659.06 Z" fill="none" stroke="#4ea6f7" stroke-width="2.6"/>
<path d="M1067.6,364.5 L1067.1,349.5 L1111.6,299.5 L1112.1,314.5 Z" fill="#8a8782"/>
<path d="M1045.1,349.5 L1067.1,349.5 L1111.6,299.5 L1089.6,299.5 Z" fill="#8f8c87"/>
<path d="M1045.6,364.5 L1067.6,364.5 L1067.1,349.5 L1045.1,349.5 Z" fill="#86837e"/>
<path d="M1045.6,364.5 L1045.1,349.5 L1067.1,349.5 L1067.6,364.5 M1045.1,349.5 L1089.6,299.5 L1111.6,299.5 L1067.1,349.5 M1111.6,299.5 L1112.1,314.5 L1067.6,364.5" fill="none" stroke="#ffff00" stroke-width="1.2"/>
<path d="M1067.6,364.5 L1112.1,314.5" fill="none" stroke="#222" stroke-width="1.2"/>
<path d="M1080.7,365.2 L1082.0,350.3 L1103.9,352.9 L1102.6,367.8 M1125.2,315.2 L1126.5,300.3 L1148.4,302.9 L1147.1,317.8 M1080.7,365.2 L1125.2,315.2 M1102.6,367.8 L1147.1,317.8 M1103.9,352.9 L1148.4,302.9 M1082.0,350.3 L1126.5,300.3 M1115.6,370.2 L1118.6,355.6 L1140.2,360.7 L1137.1,375.3 M1160.1,320.2 L1163.1,305.6 L1184.7,310.7 L1181.6,325.3 M1115.6,370.2 L1160.1,320.2 M1137.1,375.3 L1181.6,325.3 M1140.2,360.7 L1184.7,310.7 M1118.6,355.6 L1163.1,305.6 M1149.7,379.1 L1154.5,365.1 L1175.4,372.7 L1170.6,386.8 M1194.2,329.1 L1199.0,315.1 L1219.9,322.7 L1215.1,336.8 M1149.7,379.1 L1194.2,329.1 M1170.6,386.8 L1215.1,336.8 M1175.4,372.7 L1219.9,322.7 M1154.5,365.1 L1199.0,315.1 M1182.7,392.1 L1189.2,378.7 L1209.0,388.8 L1202.6,402.1 M1227.2,342.1 L1233.7,328.7 L1253.5,338.8 L1247.1,352.1 M1182.7,392.1 L1227.2,342.1 M1202.6,402.1 L1247.1,352.1 M1209.0,388.8 L1253.5,338.8 M1189.2,378.7 L1233.7,328.7 M1214.1,408.8 L1222.1,396.3 L1240.7,408.6 L1232.7,421.1 M1258.6,358.8 L1266.6,346.3 L1285.2,358.6 L1277.2,371.1 M1214.1,408.8 L1258.6,358.8 M1232.7,421.1 L1277.2,371.1 M1240.7,408.6 L1285.2,358.6 M1222.1,396.3 L1266.6,346.3 M1243.4,429.0 L1252.8,417.7 L1269.9,432.0 L1260.4,443.4 M1287.9,379.0 L1297.3,367.7 L1314.4,382.0 L1304.9,393.4 M1243.4,429.0 L1287.9,379.0 M1260.4,443.4 L1304.9,393.4 M1269.9,432.0 L1314.4,382.0 M1252.8,417.7 L1297.3,367.7 M1270.1,452.5 L1280.9,442.4 L1296.2,458.6 L1285.5,468.8 M1314.6,402.5 L1325.4,392.4 L1340.7,408.6 L1330.0,418.8 M1270.1,452.5 L1314.6,402.5 M1285.5,468.8 L1330.0,418.8 M1296.2,458.6 L1340.7,408.6 M1280.9,442.4 L1325.4,392.4 M1294.0,478.9 L1305.9,470.2 L1319.3,488.1 L1307.4,496.8 M1338.5,428.9 L1350.4,420.2 L1363.8,438.1 L1351.9,446.8 M1294.0,478.9 L1338.5,428.9 M1307.4,496.8 L1351.9,446.8 M1319.3,488.1 L1363.8,438.1 M1305.9,470.2 L1350.4,420.2 M1314.7,507.9 L1327.6,500.7 L1338.8,519.9 L1325.9,527.2 M1359.2,457.9 L1372.1,450.7 L1383.3,469.9 L1370.4,477.2 M1314.7,507.9 L1359.2,457.9 M1325.9,527.2 L1370.4,477.2 M1338.8,519.9 L1383.3,469.9 M1327.6,500.7 L1372.1,450.7 M1331.9,539.0 L1345.6,533.4 L1354.5,553.7 L1340.8,559.4 M1376.4,489.0 L1390.1,483.4 L1399.0,503.7 L1385.3,509.4 M1331.9,539.0 L1376.4,489.0 M1340.8,559.4 L1385.3,509.4 M1354.5,553.7 L1399.0,503.7 M1345.6,533.4 L1390.1,483.4 M1345.4,571.8 L1359.7,567.8 L1366.1,589.1 L1351.8,593.0 M1389.9,521.8 L1404.2,517.8 L1410.6,539.1 L1396.3,543.0 M1345.4,571.8 L1389.9,521.8 M1351.8,593.0 L1396.3,543.0 M1366.1,589.1 L1410.6,539.1 M1359.7,567.8 L1404.2,517.8 M1354.9,605.9 L1369.6,603.6 L1373.6,625.4 L1358.8,627.6 M1399.4,555.9 L1414.1,553.6 L1418.1,575.4 L1403.3,577.6 M1354.9,605.9 L1399.4,555.9 M1358.8,627.6 L1403.3,577.6 M1373.6,625.4 L1418.1,575.4 M1369.6,603.6 L1414.1,553.6 M1360.3,640.7 L1375.3,640.2 L1376.6,662.2 L1361.7,662.7 M1404.8,590.7 L1419.8,590.2 L1421.1,612.2 L1406.2,612.7 M1360.3,640.7 L1404.8,590.7 M1361.7,662.7 L1406.2,612.7 M1376.6,662.2 L1421.1,612.2 M1375.3,640.2 L1419.8,590.2 M1361.7,675.8 L1376.6,677.1 L1375.4,699.0 L1360.4,697.7 M1406.2,625.8 L1421.1,627.1 L1419.9,649.0 L1404.9,647.7 M1361.7,675.8 L1406.2,625.8 M1360.4,697.7 L1404.9,647.7 M1375.4,699.0 L1419.9,649.0 M1376.6,677.1 L1421.1,627.1 M1358.8,710.7 L1373.6,713.7 L1369.7,735.3 L1355.0,732.2 M1403.3,660.7 L1418.1,663.7 L1414.2,685.3 L1399.5,682.2 M1358.8,710.7 L1403.3,660.7 M1355.0,732.2 L1399.5,682.2 M1369.7,735.3 L1414.2,685.3 M1373.6,713.7 L1418.1,663.7 M1351.9,744.8 L1366.2,749.6 L1359.8,770.5 L1345.5,765.7 M1396.4,694.8 L1410.7,699.6 L1404.3,720.5 L1390.0,715.7 M1351.9,744.8 L1396.4,694.8 M1345.5,765.7 L1390.0,715.7 M1359.8,770.5 L1404.3,720.5 M1366.2,749.6 L1410.7,699.6 M1340.9,777.8 L1354.6,784.3 L1345.8,804.1 L1332.0,797.7 M1385.4,727.8 L1399.1,734.3 L1390.3,754.1 L1376.5,747.7 M1340.9,777.8 L1385.4,727.8 M1332.0,797.7 L1376.5,747.7 M1345.8,804.1 L1390.3,754.1 M1354.6,784.3 L1399.1,734.3 M1326.1,809.2 L1339.0,817.2 L1327.8,835.8 L1314.9,827.8 M1370.6,759.2 L1383.5,767.2 L1372.3,785.8 L1359.4,777.8 M1326.1,809.2 L1370.6,759.2 M1314.9,827.8 L1359.4,777.8 M1327.8,835.8 L1372.3,785.8 M1339.0,817.2 L1383.5,767.2 M1307.6,838.4 L1319.5,847.9 L1306.2,865.0 L1294.2,855.5 M1352.1,788.4 L1364.0,797.9 L1350.7,815.0 L1338.7,805.5 M1307.6,838.4 L1352.1,788.4 M1294.2,855.5 L1338.7,805.5 M1306.2,865.0 L1350.7,815.0 M1319.5,847.9 L1364.0,797.9 M1285.7,865.2 L1296.4,876.0 L1281.1,891.3 L1270.4,880.5 M1330.2,815.2 L1340.9,826.0 L1325.6,841.3 L1314.9,830.5 M1285.7,865.2 L1330.2,815.2 M1270.4,880.5 L1314.9,830.5 M1281.1,891.3 L1325.6,841.3 M1296.4,876.0 L1340.9,826.0 M1260.7,889.1 L1270.2,901.0 L1253.1,914.4 L1243.6,902.4 M1305.2,839.1 L1314.7,851.0 L1297.6,864.4 L1288.1,852.4 M1260.7,889.1 L1305.2,839.1 M1243.6,902.4 L1288.1,852.4 M1253.1,914.4 L1297.6,864.4 M1270.2,901.0 L1314.7,851.0 M1233.0,909.8 L1241.0,922.7 L1222.4,933.9 L1214.4,921.0 M1277.5,859.8 L1285.5,872.7 L1266.9,883.9 L1258.9,871.0 M1233.0,909.8 L1277.5,859.8 M1214.4,921.0 L1258.9,871.0 M1222.4,933.9 L1266.9,883.9 M1241.0,922.7 L1285.5,872.7 M1202.9,927.0 L1209.3,940.7 L1189.5,949.6 L1183.0,935.8 M1247.4,877.0 L1253.8,890.7 L1234.0,899.6 L1227.5,885.8 M1202.9,927.0 L1247.4,877.0 M1183.0,935.8 L1227.5,885.8 M1189.5,949.6 L1234.0,899.6 M1209.3,940.7 L1253.8,890.7 M1170.9,940.4 L1175.7,954.7 L1154.9,961.2 L1150.0,946.8 M1215.4,890.4 L1220.2,904.7 L1199.4,911.2 L1194.5,896.8 M1170.9,940.4 L1215.4,890.4 M1150.0,946.8 L1194.5,896.8 M1154.9,961.2 L1199.4,911.2 M1175.7,954.7 L1220.2,904.7 M1137.4,949.9 L1140.5,964.7 L1119.0,968.6 L1115.9,953.8 M1181.9,899.9 L1185.0,914.7 L1163.5,918.6 L1160.4,903.8 M1137.4,949.9 L1181.9,899.9 M1115.9,953.8 L1160.4,903.8 M1119.0,968.6 L1163.5,918.6 M1140.5,964.7 L1185.0,914.7 M1102.9,955.4 L1104.2,970.3 L1082.3,971.6 L1081.0,956.7 M1147.4,905.4 L1148.7,920.3 L1126.8,921.6 L1125.5,906.7 M1102.9,955.4 L1147.4,905.4 M1081.0,956.7 L1125.5,906.7 M1082.3,971.6 L1126.8,921.6 M1104.2,970.3 L1148.7,920.3 M1067.9,956.7 L1067.4,971.6 L1045.5,970.3 L1045.9,955.4 M1112.4,906.7 L1111.9,921.6 L1090.0,920.3 L1090.4,905.4 M1067.9,956.7 L1112.4,906.7 M1045.9,955.4 L1090.4,905.4 M1045.5,970.3 L1090.0,920.3 M1067.4,971.6 L1111.9,921.6 M1032.8,953.8 L1030.6,968.6 L1008.9,964.7 L1011.1,949.9 M1077.3,903.8 L1075.1,918.6 L1053.4,914.7 L1055.6,899.9 M1032.8,953.8 L1077.3,903.8 M1011.1,949.9 L1055.6,899.9 M1008.9,964.7 L1053.4,914.7 M1030.6,968.6 L1075.1,918.6 M998.2,946.9 L994.3,961.2 L973.1,954.8 L977.0,940.4 M1042.7,896.9 L1038.8,911.2 L1017.6,904.8 L1021.5,890.4 M998.2,946.9 L1042.7,896.9 M977.0,940.4 L1021.5,890.4 M973.1,954.8 L1017.6,904.8 M994.3,961.2 L1038.8,911.2 M964.6,935.9 L959.0,949.6 L938.6,940.7 L944.2,927.0 M1009.1,885.9 L1003.5,899.6 L983.1,890.7 L988.7,877.0 M964.6,935.9 L1009.1,885.9 M944.2,927.0 L988.7,877.0 M938.6,940.7 L983.1,890.7 M959.0,949.6 L1003.5,899.6 M932.4,921.0 L925.1,933.9 L905.8,922.8 L913.1,909.8 M976.9,871.0 L969.6,883.9 L950.3,872.8 L957.6,859.8 M932.4,921.0 L976.9,871.0 M913.1,909.8 L957.6,859.8 M905.8,922.8 L950.3,872.8 M925.1,933.9 L969.6,883.9 M902.0,902.5 L893.3,914.4 L875.4,901.1 L884.1,889.2 M946.5,852.5 L937.8,864.4 L919.9,851.1 L928.6,839.2 M902.0,902.5 L946.5,852.5 M884.1,889.2 L928.6,839.2 M875.4,901.1 L919.9,851.1 M893.3,914.4 L937.8,864.4 M873.9,880.6 L863.8,891.4 L847.6,876.0 L857.7,865.3 M918.4,830.6 L908.3,841.4 L892.1,826.0 L902.2,815.3 M873.9,880.6 L918.4,830.6 M857.7,865.3 L902.2,815.3 M847.6,876.0 L892.1,826.0 M863.8,891.4 L908.3,841.4 M848.5,855.6 L837.2,865.1 L822.8,848.0 L834.2,838.5 M893.0,805.6 L881.7,815.1 L867.3,798.0 L878.7,788.5 M848.5,855.6 L893.0,805.6 M834.2,838.5 L878.7,788.5 M822.8,848.0 L867.3,798.0 M837.2,865.1 L881.7,815.1 M826.2,827.9 L813.8,835.9 L801.5,817.3 L813.9,809.3 M870.7,777.9 L858.3,785.9 L846.0,767.3 L858.4,759.3 M826.2,827.9 L870.7,777.9 M813.9,809.3 L858.4,759.3 M801.5,817.3 L846.0,767.3 M813.8,835.9 L858.3,785.9 M807.2,797.8 L793.9,804.2 L783.8,784.4 L797.2,777.9 M851.7,747.8 L838.4,754.2 L828.3,734.4 L841.7,727.9 M807.2,797.8 L851.7,747.8 M797.2,777.9 L841.7,727.9 M783.8,784.4 L828.3,734.4 M793.9,804.2 L838.4,754.2 M791.9,765.8 L777.8,770.6 L770.2,749.7 L784.2,744.9 M836.4,715.8 L822.3,720.6 L814.7,699.7 L828.7,694.9 M791.9,765.8 L836.4,715.8 M784.2,744.9 L828.7,694.9 M770.2,749.7 L814.7,699.7 M777.8,770.6 L822.3,720.6 M780.4,732.3 L765.8,735.4 L760.6,713.9 L775.2,710.8 M824.9,682.3 L810.3,685.4 L805.1,663.9 L819.7,660.8 M780.4,732.3 L824.9,682.3 M775.2,710.8 L819.7,660.8 M760.6,713.9 L805.1,663.9 M765.8,735.4 L810.3,685.4 M772.9,697.8 L758.0,699.1 L755.4,677.2 L770.3,675.9 M817.4,647.8 L802.5,649.1 L799.9,627.2 L814.8,625.9 M772.9,697.8 L817.4,647.8 M770.3,675.9 L814.8,625.9 M755.4,677.2 L799.9,627.2 M758.0,699.1 L802.5,649.1 M769.5,662.8 L754.5,662.3 L754.5,640.3 L769.5,640.8 M814.0,612.8 L799.0,612.3 L799.0,590.3 L814.0,590.8 M769.5,662.8 L814.0,612.8 M769.5,640.8 L814.0,590.8 M754.5,640.3 L799.0,590.3 M754.5,662.3 L799.0,612.3 M770.2,627.7 L755.3,625.5 L757.9,603.8 L772.8,606.0 M814.7,577.7 L799.8,575.5 L802.4,553.8 L817.3,556.0 M770.2,627.7 L814.7,577.7 M772.8,606.0 L817.3,556.0 M757.9,603.8 L802.4,553.8 M755.3,625.5 L799.8,575.5 M775.1,593.1 L760.5,589.2 L765.7,568.0 L780.3,571.9 M819.6,543.1 L805.0,539.2 L810.2,518.0 L824.8,521.9 M775.1,593.1 L819.6,543.1 M780.3,571.9 L824.8,521.9 M765.7,568.0 L810.2,518.0 M760.5,589.2 L805.0,539.2 M784.1,559.5 L770.0,553.9 L777.7,533.5 L791.8,539.1 M828.6,509.5 L814.5,503.9 L822.2,483.5 L836.3,489.1 M784.1,559.5 L828.6,509.5 M791.8,539.1 L836.3,489.1 M777.7,533.5 L822.2,483.5 M770.0,553.9 L814.5,503.9 M797.0,527.3 L783.7,520.0 L793.7,500.8 L807.1,508.0 M841.5,477.3 L828.2,470.0 L838.2,450.8 L851.6,458.0 M797.0,527.3 L841.5,477.3 M807.1,508.0 L851.6,458.0 M793.7,500.8 L838.2,450.8 M783.7,520.0 L828.2,470.0 M813.7,496.9 L801.3,488.2 L813.6,470.3 L826.0,479.0 M858.2,446.9 L845.8,438.2 L858.1,420.3 L870.5,429.0 M813.7,496.9 L858.2,446.9 M826.0,479.0 L870.5,429.0 M813.6,470.3 L858.1,420.3 M801.3,488.2 L845.8,438.2 M834.0,468.8 L822.6,458.7 L837.0,442.5 L848.3,452.6 M878.5,418.8 L867.1,408.7 L881.5,392.5 L892.8,402.6 M834.0,468.8 L878.5,418.8 M848.3,452.6 L892.8,402.6 M837.0,442.5 L881.5,392.5 M822.6,458.7 L867.1,408.7 M857.5,443.5 L847.3,432.1 L863.5,417.7 L873.7,429.1 M902.0,393.5 L891.8,382.1 L908.0,367.7 L918.2,379.1 M857.5,443.5 L902.0,393.5 M873.7,429.1 L918.2,379.1 M863.5,417.7 L908.0,367.7 M847.3,432.1 L891.8,382.1 M883.9,421.1 L875.1,408.7 L893.0,396.4 L901.7,408.9 M928.4,371.1 L919.6,358.7 L937.5,346.4 L946.2,358.9 M883.9,421.1 L928.4,371.1 M901.7,408.9 L946.2,358.9 M893.0,396.4 L937.5,346.4 M875.1,408.7 L919.6,358.7 M912.8,402.2 L905.6,388.8 L924.8,378.8 L932.1,392.1 M957.3,352.2 L950.1,338.8 L969.3,328.8 L976.6,342.1 M912.8,402.2 L957.3,352.2 M932.1,392.1 L976.6,342.1 M924.8,378.8 L969.3,328.8 M905.6,388.8 L950.1,338.8 M943.9,386.8 L938.3,372.8 L958.6,365.1 L964.3,379.2 M988.4,336.8 L982.8,322.8 L1003.1,315.1 L1008.8,329.2 M943.9,386.8 L988.4,336.8 M964.3,379.2 L1008.8,329.2 M958.6,365.1 L1003.1,315.1 M938.3,372.8 L982.8,322.8 M976.7,375.3 L972.7,360.8 L994.0,355.6 L997.9,370.2 M1021.2,325.3 L1017.2,310.8 L1038.5,305.6 L1042.4,320.2 M976.7,375.3 L1021.2,325.3 M997.9,370.2 L1042.4,320.2 M994.0,355.6 L1038.5,305.6 M972.7,360.8 L1017.2,310.8 M1010.8,367.9 L1008.5,353.0 L1030.3,350.4 L1032.5,365.2 M1055.3,317.9 L1053.0,303.0 L1074.8,300.4 L1077.0,315.2 M1010.8,367.9 L1055.3,317.9 M1032.5,365.2 L1077.0,315.2 M1030.3,350.4 L1074.8,300.4 M1008.5,353.0 L1053.0,303.0" fill="none" stroke="#ffff00" stroke-width="2.3" stroke-linejoin="round"/>
<g stroke="#111" stroke-width="1.1" fill="none">
<path d="M1019.5 287.6 H1089.5"/><path d="M1043.6 283.5 L1045.4 346.6 M1065.7 283.5 L1067.2 346"/>
<path d="M837.2 325.3 V385.5"/><path d="M833.3 349.2 H1041.5 M833.3 362.5 H1023"/>
</g>
<g fill="#111"><path d="M1030 285.6 L1043.6 287.6 L1030 289.6 Z M1079 285.6 L1065.7 287.6 L1079 289.6 Z"/>
<path d="M835.2 335.5 L837.2 349.2 L839.2 335.5 Z M835.2 376 L837.2 362.5 L839.2 376 Z"/></g>
<text x="1031" y="282.3" font-family="Liberation Sans" font-size="18" fill="#222" textLength="44" lengthAdjust="spacingAndGlyphs">6.50</text>
<text transform="translate(842 331) rotate(90)" x="0" y="0" font-family="Liberation Sans" font-size="18.5" fill="#111" textLength="41" lengthAdjust="spacingAndGlyphs">4.00</text>

<path d="M1061 452.5 L1317.6 291.7" stroke="#fff" stroke-width="2.4"/><path d="M1061 452.5 L1317.6 291.7" stroke="#3b3630" stroke-width="0.9"/>
<circle cx="1060.4" cy="452.5" r="3.4" fill="#e8e8e8" stroke="#111" stroke-width="1.1"/>
<circle cx="1063" cy="664" r="7.5" fill="#6d6d6d"/><path d="M1063 657.5 V665 M1059 660.3 H1068" stroke="#4ea6f7" stroke-width="1.2"/>
<path d="M322.8 910 V883" stroke="#0000a0" stroke-width="3.6"/><path d="M318 884.5 L322 874 L326 884.5 Z" fill="#0000a0"/>
<path d="M322 910 H350" stroke="#b00000" stroke-width="3.6"/><path d="M348 906 L360 910 L348 914.5 Z" fill="#a00000"/>
<path d="M325 909 L330 903" stroke="#6ccc6c" stroke-width="3"/>
<text x="318.6" y="867" font-family="Liberation Sans" font-size="9.5" fill="#3333ff">Z</text>
<text x="328.4" y="901" font-family="Liberation Sans" font-size="9" fill="#2a9a2a">Y</text>
<text x="364" y="910.5" font-family="Liberation Sans" font-size="10" fill="#ff6a6a">X</text>

</svg>
<div class="a" style="left:1316px;top:245px;width:151px;height:94px;background:#f5f5f5;border:1.5px solid #111;box-sizing:border-box;"></div>
<div class="a" style="left:1384px;top:276px;width:83px;height:63px;background:#fff;border-left:1.5px solid #111;border-top:1.5px solid #111;border-right:1.5px solid #111;border-bottom:1.5px solid #111;box-sizing:border-box;"></div>
<div class="t" style="left:1361.4px;top:255.5px;font-size:12.2px;color:#111;">Direction 1</div>
<div class="t" style="left:1325.5px;top:286.5px;font-size:12.2px;color:#111;">Spacing:</div>
<div class="t" style="left:1325.5px;top:317.5px;font-size:12.2px;color:#111;">Instances:</div>
<div class="t" style="left:1389.6px;top:286.5px;font-size:12.2px;color:#111;">360deg</div>
<div class="t" style="left:1389.6px;top:317.5px;font-size:12.2px;color:#111;">53</div>
<div class="a" style="left:1449px;top:284px;width:14px;height:17px;background:#e9e9e9;border:1px solid #b8b8b8;box-sizing:border-box;"></div>
<svg class="a" style="left:1449px;top:284px" width="14" height="17"><path d="M4 7 H10 L7 4 Z M4 10 H10 L7 13 Z" fill="#111"/><path d="M1 8.5 H13" stroke="#b8b8b8"/></svg>
<div class="a" style="left:1449px;top:315px;width:14px;height:17px;background:#e9e9e9;border:1px solid #b8b8b8;box-sizing:border-box;"></div>
<svg class="a" style="left:1449px;top:315px" width="14" height="17"><path d="M4 7 H10 L7 4 Z M4 10 H10 L7 13 Z" fill="#111"/><path d="M1 8.5 H13" stroke="#b8b8b8"/></svg>
<svg class="a" style="left:1313px;top:287px" width="9" height="9"><circle cx="4.5" cy="4.5" r="3.4" fill="#f0f0f0" stroke="#111" stroke-width="1.1"/><path d="M2 4.5 H7" stroke="#111"/></svg>
<svg class="a" style="left:1451px;top:342px" width="14" height="10"><path d="M2.5 8 L6.5 4 L10.5 8" fill="none" stroke="#555" stroke-width="1.5"/></svg>
<svg class="a" style="left:276px;top:160px" width="10" height="12"><path d="M2 2 L7 6 L2 10 Z" fill="#222"/></svg>
<svg class="a" style="left:294.9px;top:155.9px" width="19" height="22" viewBox="0 0 19 22"><path d="M7.36,1.12 L11.45,3.47 L5.21,7.06 L1.12,4.70 Z" fill="#fbe487" stroke="#6b5200" stroke-width="1.01" stroke-linejoin="round"/><path d="M11.45,3.47 L5.21,7.06 L5.21,12.43 L11.45,8.85 Z" fill="#f2c22a" stroke="#6b5200" stroke-width="1.01" stroke-linejoin="round"/><path d="M11.45,8.85 L17.10,12.10 L10.86,15.68 L5.21,12.43 Z" fill="#fbe487" stroke="#6b5200" stroke-width="1.01" stroke-linejoin="round"/><path d="M17.10,12.10 L10.86,15.68 L10.86,20.61 L17.10,17.02 Z" fill="#f2c22a" stroke="#6b5200" stroke-width="1.01" stroke-linejoin="round"/><path d="M1.12,15.01 L10.86,20.61 L10.86,15.68 L5.21,12.43 L5.21,7.06 L1.12,4.70 Z" fill="#e9b300" stroke="#6b5200" stroke-width="1.01" stroke-linejoin="round"/></svg>
<div class="t" style="left:318.5px;top:161.1px;font-size:14.7px;color:#111;">Part2 (Default) &lt;&lt;D...</div>
<svg class="a" style="left:915px;top:124px" width="360" height="26" viewBox="915 124 360 26">
<g stroke-width="1"><circle cx="931" cy="134" r="6.5" fill="#e4e8ec" stroke="#777"/><path d="M926 139 L920.5 144.5" stroke="#5b9bc4" stroke-width="3"/>
<circle cx="956" cy="135" r="6.5" fill="#e4e8ec" stroke="#777"/><path d="M951 140 L945.5 145.5" stroke="#5b9bc4" stroke-width="3"/><path d="M951 128 H963.5 V139" fill="none" stroke="#444" stroke-dasharray="2 1.5"/>
<path d="M974 141 L987 130 L990 133 L977 144 Z" fill="#e2e2e2" stroke="#666"/><path d="M982 142 H990 M982 142 L985 139 M982 142 L985 145" stroke="#4a8bc0" stroke-width="2"/>
<path d="M999 131 C1003 128 1011 128 1015 131 V143 C1011 146 1003 146 999 143 Z" fill="#eee" stroke="#ddd"/>
<path d="M1023 141 L1036 130 L1039 133 L1026 144 Z" fill="#e2e2e2" stroke="#666"/><path d="M1027 134 L1033 128 L1031 133 L1035 132 L1029 138" fill="#f5c000" stroke="#d06020" stroke-width="0.7"/><text x="1032" y="146" font-family="Liberation Serif" font-size="10" fill="#3a7ab0">A</text>
<path d="M1051 134 H1062 V146 H1051 Z" fill="#8fc4e0" stroke="#2a6f9e"/><path d="M1051 134 L1055 129 H1067 V141 L1062 146 M1062 134 L1067 129" fill="none" stroke="#444"/>
<path d="M1092 131 L1101 128 L1108 131 V143 L1100 146 L1092 143 Z" fill="#eee" stroke="#555"/><path d="M1093 132 L1100 134 V146 L1093 143 Z" fill="#7fb8dc"/>
<path d="M1130 137 C1135 129 1143 129 1148 137 C1143 145 1135 145 1130 137 Z" fill="#ddd" stroke="#aaa"/><circle cx="1139" cy="137" r="4" fill="#777"/><path d="M1139 128 V146" stroke="#555" stroke-width="1.2"/>
<circle cx="1180" cy="135" r="8" fill="#e8e8e8"/><path d="M1180 146 L1189 136" stroke="#ddd" stroke-width="3"/>
<circle cx="1205" cy="135" r="8" fill="#e8e8e8"/><rect x="1195" y="139" width="19" height="7" fill="#ddd"/>
<rect x="1236.5" y="129.5" width="17.5" height="12" fill="#e0e0e0" stroke="#444" stroke-width="1.2"/><path d="M1245 141.5 V144.5 M1240.5 145 H1249.5" stroke="#333" stroke-width="1.5"/>
</g>
<path d="M1076 136 H1081 L1078.5 139 Z M1116 136 H1121 L1118.5 139 Z M1156 136 H1161 L1158.5 139 Z M1222 136 H1227 L1224.5 139 Z M1262 136 H1267 L1264.5 139 Z" fill="#8a8a8a"/>
</svg>
<svg class="a" style="left:1785px;top:126px" width="125" height="22" viewBox="1785 126 125 22" fill="none" stroke="#9a9a9a" stroke-width="1">
<rect x="1790.5" y="130.5" width="11" height="13"/><path d="M1790.5 131 H1801.5" stroke-width="2"/><path d="M1797 134 L1793 137 L1797 140 Z" fill="#9a9a9a" stroke="none"/>
<rect x="1816.5" y="130.5" width="11" height="13"/><path d="M1816.5 131 H1827.5" stroke-width="2"/><path d="M1823 134 L1827 137 L1823 140 Z" fill="#9a9a9a" stroke="none"/>
<path d="M1843 141.8 H1853" stroke-width="1.6"/>
<rect x="1867.5" y="136.5" width="9" height="7"/><path d="M1870.5 136 V130.5 H1881.5 V138.5 H1876.5"/><path d="M1867.5 137 H1876.5 M1870.5 131 H1881.5" stroke-width="1.5"/>
<path d="M1895 132 L1905 142 M1905 132 L1895 142"/>
</svg>
<svg class="a" style="left:1805px;top:154px" width="80" height="62" viewBox="1805 154 80 62">
<path d="M1812 171 L1820 178.5 L1836 162" fill="none" stroke="#d6e9cf" stroke-width="5.5"/>
<path d="M1858 190 L1876 208 M1876 190 L1858 208" stroke="#f3d2d2" stroke-width="5.5" stroke-linecap="round"/>
</svg>
<div class="a" style="left:1887px;top:205px;width:32px;height:210px;background:#d6d6d6;border-left:1px solid #8a8a8a;border-top:1px solid #8a8a8a;border-bottom:1px solid #8a8a8a;box-sizing:border-box;"></div>
<div class="a" style="left:1888px;top:206px;width:31px;height:28px;background:#f4f4f4;"></div>
<div class="a" style="left:1888px;top:234px;width:31px;height:1px;background:#9a9a9a;"></div>
<div class="a" style="left:1888px;top:264px;width:31px;height:1px;background:#9a9a9a;"></div>
<div class="a" style="left:1888px;top:294px;width:31px;height:1px;background:#9a9a9a;"></div>
<div class="a" style="left:1888px;top:324px;width:31px;height:1px;background:#9a9a9a;"></div>
<div class="a" style="left:1888px;top:354px;width:31px;height:1px;background:#9a9a9a;"></div>
<div class="a" style="left:1888px;top:384px;width:31px;height:1px;background:#9a9a9a;"></div>
<svg class="a" style="left:1888px;top:205px" width="31" height="210" viewBox="1888 205 31 210">
<circle cx="1904" cy="219.5" r="8.5" fill="#1a4f7a"/><circle cx="1904" cy="219.5" r="6" fill="none" stroke="#6aa0c8" stroke-width="0.8"/><path d="M1902.5 216.5 L1906 219.5 L1902.5 222.5 Z" fill="#cfe"/>
<path d="M1896.5 250 L1904 242.5 L1911.5 250" fill="none" stroke="#1d5b8a" stroke-width="1.8"/><path d="M1898.5 249 V257.5 H1909.5 V249" fill="#fff" stroke="#222" stroke-width="1.1"/><rect x="1903" y="251.5" width="3" height="6" fill="none" stroke="#222" stroke-width="0.9"/>
<path d="M1897 272 L1905 270 L1910 274 V286 L1902 288 L1897 284 Z" fill="#fff" stroke="#222" stroke-width="1"/><path d="M1900 273 V287 M1903 272 V287 M1906 271 V286" stroke="#222" stroke-width="0.8"/>
<path d="M1896 302 H1902 L1904 304 H1911 V307 H1899 L1896 317 Z" fill="#f3f3f3" stroke="#333" stroke-width="1"/><path d="M1899 307 H1913 L1910 317 H1896 Z" fill="#fff" stroke="#333" stroke-width="1"/>
<rect x="1896.5" y="332.5" width="16" height="15" fill="#fff" stroke="#333" stroke-width="1"/><path d="M1898 335 H1905 V338 H1903 V343 H1906 V345 H1899 V343 H1901 V338 H1898 Z" fill="#f3c000"/><rect x="1907" y="335" width="4" height="3" fill="#f3c000"/><rect x="1908" y="339" width="3" height="7" fill="#aaa"/>
<circle cx="1904" cy="369.5" r="8" fill="#e6b800"/><path d="M1904 369.5 L1896 369.5 A8 8 0 0 1 1904 361.5 Z" fill="#3a7fd0"/><path d="M1904 369.5 L1904 361.5 A8 8 0 0 1 1912 369.5 Z" fill="#d42a1c"/><path d="M1904 369.5 L1896 369.5 A8 8 0 0 0 1904 377.5 Z" fill="#2aa63a"/>
<rect x="1896" y="392" width="16" height="16" fill="#fff" stroke="#1d4f7a" stroke-width="1.1"/><rect x="1896" y="392" width="16" height="3" fill="#3a8cc8"/><path d="M1898 398 H1901 M1898 401.5 H1901 M1898 405 H1901" stroke="#2a7ab8" stroke-width="1.5"/><path d="M1903 398 H1910 M1903 401.5 H1910 M1903 405 H1910" stroke="#333" stroke-width="1"/>
</svg>
<div class="a" style="left:0px;top:0px;width:1919px;height:40px;background:#f7f7f7;"></div>
<div class="a" style="left:0px;top:0px;width:1919px;height:1px;background:#a9a9a9;"></div>
<div class="a" style="left:0px;top:39px;width:1919px;height:1px;background:#c4c4c4;"></div>
<svg class="a" style="left:4px;top:5px" width="24" height="24" viewBox="0 0 24 24">
<path d="M8.5 2.6 C11.5 2 15 2.2 16 3.2 C14.5 5 13 6.5 11.5 8 C13.5 8.8 13 10.5 11 12 C8 14.5 5 18 1.5 22" fill="none" stroke="#e1251b" stroke-width="1.7" stroke-linecap="round"/>
<path d="M21.5 9 C17.5 8.5 14 9.5 14.2 12 C14.4 14 18.5 15 17.8 17.5 C17 20 13 20.5 10.5 20" fill="none" stroke="#e1251b" stroke-width="2" stroke-linecap="round"/>
<path d="M1.5 22 C4 20 7.5 18.5 10 18" fill="none" stroke="#e1251b" stroke-width="1.2" stroke-linecap="round"/>
</svg><div class="t" style="left:30.0px;top:14.7px;font-size:12.45px;color:#e1251b;font-style:italic;"><b style="font-size:12.45px">SOLID</b><span style="font-size:11.3px">WORKS</span></div>
<div class="t" style="left:146.5px;top:15.9px;font-size:14.1px;color:#000;">File</div>
<div class="t" style="left:182.0px;top:15.9px;font-size:14.1px;color:#000;">Edit</div>
<div class="t" style="left:221.3px;top:15.9px;font-size:14.1px;color:#000;">View</div>
<div class="t" style="left:266.3px;top:15.9px;font-size:14.1px;color:#000;">Insert</div>
<div class="t" style="left:317.0px;top:15.9px;font-size:14.1px;color:#000;">Tools</div>
<div class="t" style="left:363.8px;top:15.9px;font-size:14.1px;color:#000;">Window</div>
<svg class="a" style="left:428px;top:12px" width="16" height="16" viewBox="0 0 16 16"><path d="M9 1 L15 7 L12.5 7.5 L9.5 10.5 L9 13.5 L2.5 7 L5.5 6.5 L8.5 3.5 Z" fill="#7a7a7a"/><path d="M5 11 L1.5 14.5" stroke="#7a7a7a" stroke-width="1.6"/></svg>
<div class="a" style="left:449px;top:1px;width:1px;height:38px;background:#cfcfcf;"></div>
<svg class="a" style="left:470px;top:8px" width="480" height="24" viewBox="470 8 480 24">
<path d="M476 19 L484 11 L492 19 M478 18 V28 H490 V18 M483 28 V22 H487 V28" fill="none" stroke="#c8c8c8" stroke-width="1.3"/>
<path d="M510 11 H519 L524 16 V28 H510 Z M519 11 V16 H524" fill="#f7f7f7" stroke="#c8c8c8" stroke-width="1.2"/>
<path d="M554 15 H562 L564 17 H571 L574 20 L569 28 H554 Z" fill="#ececec" stroke="#c8c8c8" stroke-width="1.2"/>
<path d="M602 11 H620 V28 H602 Z" fill="#d8d8d8" stroke="#c8c8c8" stroke-width="1"/>
<path d="M606 12 H616 V18 H606 Z" fill="#f0f0f0"/><path d="M606 22 H616 V28 H606 Z" fill="#bdbdbd"/>
<path d="M653 11 H664 V17 H653 Z" fill="#eee" stroke="#333" stroke-width="1"/>
<path d="M649 17 H668 V25 H649 Z" fill="#1e78b4" stroke="#1d3b55" stroke-width="1"/>
<path d="M652 24 H665 V28 H652 Z" fill="#f2f2f2" stroke="#333" stroke-width="1"/>
<path d="M698 15 L704 13 L703 18 Z M702 16 C708 13 714 17 711 26" fill="none" stroke="#c8c8c8" stroke-width="2.2"/>
<path d="M759 15 L753 13 L754 18 Z M755 16 C749 13 743 17 746 26" fill="none" stroke="#c8c8c8" stroke-width="2.2"/>
<path d="M793.5 10.5 V26 L797 22.5 L800 28 L802 27 L799.5 21.5 L804.5 21 Z" fill="#f7f7f7" stroke="#c8c8c8" stroke-width="1"/>
<rect x="841" y="11" width="10" height="17" rx="5" fill="#c8c8c8"/>
<rect x="871.5" y="11.5" width="15.5" height="17" fill="none" stroke="#c8c8c8" stroke-width="1"/>
<path d="M874 15 H877 V17 H874 Z M874 19 H877 V21 H874 Z M874 23 H877 V25 H874 Z M879 16 H885 M879 20 H885 M879 24 H885" stroke="#c8c8c8" fill="none" stroke-width="1"/>
<circle cx="912" cy="20" r="5.5" fill="none" stroke="#333" stroke-width="1.3" stroke-dasharray="2.2 1.3"/>
<circle cx="912" cy="20" r="5" fill="none" stroke="#333" stroke-width="1"/><circle cx="912" cy="20" r="2.2" fill="none" stroke="#333" stroke-width="1.1"/>
<path d="M538 18 H543.5 L540.75 21 Z M585 18 H590.5 L587.75 21 Z M632 18 H637.5 L634.75 21 Z M726 18 H731.5 L728.75 21 Z M773 18 H778.5 L775.75 21 Z M820 18 H825.5 L822.75 21 Z" fill="#8a8a8a"/>
<path d="M679 18 H684.5 L681.75 21 Z M933 18 H938.5 L935.75 21 Z" fill="#222"/>
</svg>
<div class="t" style="left:1177.5px;top:14.5px;font-size:14.2px;color:#111;">Part2 *</div>
<div class="a" style="left:1455px;top:6px;width:251px;height:28px;background:#fff;border:1px solid #c9c9c9;box-sizing:border-box;"></div>
<svg class="a" style="left:1460px;top:10px" width="22" height="22" viewBox="0 0 22 22"><circle cx="11" cy="10.5" r="8.3" fill="#fff" stroke="#333" stroke-width="1.2"/><text x="11" y="15" text-anchor="middle" font-family="Liberation Sans" font-weight="bold" font-size="12" fill="#1b5f96">?</text></svg>
<div class="t" style="left:1488.0px;top:15.7px;font-size:12.18px;color:#4a4a4a;">Search SOLIDWORKS Help</div>
<svg class="a" style="left:1666px;top:11px" width="40" height="20" viewBox="1666 11 40 20"><circle cx="1675" cy="18.5" r="6" fill="none" stroke="#777" stroke-width="1.4"/><path d="M1679.5 23 L1684 27.5" stroke="#777" stroke-width="1.6"/><path d="M1694.5 18 H1702 L1698.25 21.5 Z" fill="#777"/></svg>
<svg class="a" style="left:1715px;top:6px" width="200" height="28" viewBox="1715 6 200 28">
<circle cx="1731" cy="20" r="8.6" fill="none" stroke="#333" stroke-width="1.2"/><circle cx="1731" cy="17.5" r="3.2" fill="none" stroke="#333" stroke-width="1.2"/><path d="M1725.5 26 C1727 22 1735 22 1736.5 26" fill="none" stroke="#333" stroke-width="1.2"/>
<circle cx="1772" cy="20" r="8.6" fill="none" stroke="#333" stroke-width="1.2"/><text x="1772" y="24.5" text-anchor="middle" font-family="Liberation Sans" font-size="13" fill="#333">?</text>
<path d="M1808 24.5 H1818" stroke="#222" stroke-width="1.3"/>
<path d="M1848 16 H1858 V26 H1848 Z M1851 16 V13 H1861 V23 H1858" fill="none" stroke="#222" stroke-width="1.2"/>
<path d="M1889 14.5 L1899.5 25 M1899.5 14.5 L1889 25" stroke="#222" stroke-width="1.3"/>
</svg>
<div class="a" style="left:0px;top:40px;width:1919px;height:81px;background:#f7f7f7;"></div>
<div class="a" style="left:289px;top:42px;width:1px;height:76px;background:#c9c9c9;"></div>
<div class="a" style="left:384px;top:42px;width:1px;height:76px;background:#c9c9c9;"></div>
<div class="a" style="left:640px;top:42px;width:1px;height:76px;background:#c9c9c9;"></div>
<div class="a" style="left:765px;top:42px;width:1px;height:76px;background:#c9c9c9;"></div>
<div class="a" style="left:873px;top:42px;width:1px;height:76px;background:#c9c9c9;"></div>
<div class="a" style="left:1114px;top:42px;width:1px;height:76px;background:#c9c9c9;"></div>
<div class="a" style="left:1559px;top:42px;width:1px;height:76px;background:#c9c9c9;"></div>
<div class="t" style="left:8.5px;top:69.5px;font-size:13.6px;color:#111;">New Inspection</div>
<div class="t" style="left:33.8px;top:88.7px;font-size:13.6px;color:#111;">Project</div>
<div class="t" style="left:112.4px;top:69.5px;font-size:13.6px;color:#a9a9a9;">Edit Inspection</div>
<div class="t" style="left:135.8px;top:88.7px;font-size:13.6px;color:#a9a9a9;">Project</div>
<div class="t" style="left:211.1px;top:69.5px;font-size:13.6px;color:#a9a9a9;">Create New</div>
<div class="t" style="left:220.9px;top:88.7px;font-size:13.6px;color:#a9a9a9;">template</div>
<div class="t" style="left:324.9px;top:69.5px;font-size:13.6px;color:#a9a9a9;">Add</div>
<div class="t" style="left:295.4px;top:88.7px;font-size:13.6px;color:#a9a9a9;">Characteristic</div>
<div class="t" style="left:391.3px;top:69.5px;font-size:13.6px;color:#a9a9a9;">Add/Edit</div>
<div class="t" style="left:390.9px;top:88.7px;font-size:13.6px;color:#a9a9a9;">Balloons</div>
<div class="t" style="left:454.7px;top:69.5px;font-size:13.6px;color:#111;">Remove</div>
<div class="t" style="left:453.9px;top:88.7px;font-size:13.6px;color:#111;">Balloons</div>
<div class="t" style="left:521.1px;top:69.5px;font-size:13.6px;color:#111;">Select</div>
<div class="t" style="left:513.9px;top:88.7px;font-size:13.6px;color:#111;">Balloons</div>
<div class="t" style="left:581.3px;top:69.5px;font-size:13.6px;color:#a9a9a9;">Balloon</div>
<div class="t" style="left:573.4px;top:88.7px;font-size:13.6px;color:#a9a9a9;">Sequence</div>
<div class="t" style="left:648.2px;top:69.5px;font-size:13.6px;color:#a9a9a9;">Update Inspection</div>
<div class="t" style="left:681.8px;top:88.7px;font-size:13.6px;color:#a9a9a9;">Project</div>
<div class="t" style="left:796.7px;top:69.5px;font-size:13.6px;color:#111;">Launch</div>
<div class="t" style="left:771.8px;top:88.7px;font-size:13.6px;color:#111;">Template Editor</div>
<div class="t" style="left:879.9px;top:69.5px;font-size:13.6px;color:#111;">Edit Inspection</div>
<div class="t" style="left:898.4px;top:88.7px;font-size:13.6px;color:#111;">Methods</div>
<div class="t" style="left:1001.3px;top:69.5px;font-size:13.6px;color:#111;">Edit</div>
<div class="t" style="left:979.7px;top:88.7px;font-size:13.6px;color:#111;">Operations</div>
<div class="t" style="left:1070.3px;top:69.5px;font-size:13.6px;color:#111;">Edit</div>
<div class="t" style="left:1057.0px;top:88.7px;font-size:13.6px;color:#111;">Vendors</div>
<div class="t" style="left:1144.7px;top:47.5px;font-size:13.4px;color:#a9a9a9;">Export to 2D PDF</div>
<div class="t" style="left:1144.7px;top:73.4px;font-size:13.4px;color:#a9a9a9;">Export to Excel</div>
<div class="t" style="left:1144.7px;top:99.2px;font-size:13.4px;color:#a9a9a9;">Export to SOLIDWORKS Inspection Project</div>
<div class="t" style="left:1441.0px;top:47.5px;font-size:13.4px;color:#a9a9a9;">Export to 3D PDF</div>
<div class="t" style="left:1441.0px;top:73.4px;font-size:13.4px;color:#a9a9a9;">Export eDrawing</div>
<div class="t" style="left:1589.3px;top:47.5px;font-size:13.4px;color:#a9a9a9;">Net-Inspect</div>
<svg class="a" style="left:1896px;top:100px" width="16" height="14" viewBox="0 0 16 14"><path d="M4 10 L8 6 L12 10" fill="none" stroke="#333" stroke-width="1.5"/></svg>
<div class="a" style="left:0px;top:121px;width:873px;height:28px;background:#f7f7f7;"></div>
<div class="a" style="left:0px;top:122px;width:671px;height:27px;background:#d5d5d5;"></div>
<div class="a" style="left:0px;top:121px;width:671px;height:1px;background:#858585;"></div>
<div class="a" style="left:873px;top:121px;width:1046px;height:1px;background:#858585;"></div>
<div class="a" style="left:0px;top:149px;width:874px;height:1px;background:#858585;"></div>
<div class="a" style="left:74px;top:121px;width:1px;height:28px;background:#858585;"></div>
<div class="a" style="left:136px;top:121px;width:1px;height:28px;background:#858585;"></div>
<div class="a" style="left:211px;top:121px;width:1px;height:28px;background:#858585;"></div>
<div class="a" style="left:309px;top:121px;width:1px;height:28px;background:#858585;"></div>
<div class="a" style="left:482px;top:121px;width:1px;height:28px;background:#858585;"></div>
<div class="a" style="left:670px;top:121px;width:1px;height:28px;background:#858585;"></div>
<div class="a" style="left:873px;top:121px;width:1px;height:28px;background:#858585;"></div>
<div class="a" style="left:671px;top:121px;width:1px;height:28px;background:#ffffff;"></div>
<div class="t" style="left:10.3px;top:128.7px;font-size:14.1px;color:#222;">Features</div>
<div class="t" style="left:84.2px;top:128.7px;font-size:14.1px;color:#222;">Sketch</div>
<div class="t" style="left:147.2px;top:128.7px;font-size:14.1px;color:#222;">Surfaces</div>
<div class="t" style="left:220.8px;top:128.7px;font-size:14.1px;color:#222;">Sheet Metal</div>
<div class="t" style="left:322.0px;top:128.7px;font-size:14.1px;color:#222;">SOLIDWORKS Add-Ins</div>
<div class="t" style="left:496.2px;top:128.7px;font-size:14.1px;color:#222;">SOLIDWORKS CAM TBM</div>
<div class="t" style="left:685.0px;top:128.5px;font-size:14.24px;color:#222;font-weight:bold;">SOLIDWORKS Inspection</div>
<svg class="a" style="left:0px;top:40px" width="1919" height="80" viewBox="0 40 1919 80">
<!-- New inspection project -->
<rect x="46.5" y="48" width="13" height="16.5" fill="#fff" stroke="#222" stroke-width="1.2"/>
<rect x="48" y="49.5" width="7" height="3" fill="#1d5f96"/>
<path d="M48 54.5 H58 M48 57 H58 M48 59.5 H58 M51 52.5 V62 M54 52.5 V62" stroke="#999" stroke-width="0.7"/>
<path d="M47.5 59.5 L50.5 62.5 L56.5 56.5" fill="none" stroke="#1f9a1f" stroke-width="2.4"/>
<path d="M60.5 47 V54 M57 50.5 H64 M58 48 L63 53 M63 48 L58 53" stroke="#f09010" stroke-width="1"/>
<!-- Edit inspection project (gray) -->
<path d="M152 48 H162 L166 52 V64.5 H152 Z" fill="#f4f4f4" stroke="#c6c6c6" stroke-width="1.1"/>
<path d="M155 55 H163 M155 58 H163 M155 61 H163" stroke="#c6c6c6" stroke-width="0.8"/>
<path d="M148.5 59 L158 49.5 L161 52.5 L151.5 62 L148 63 Z" fill="#eaeaea" stroke="#c6c6c6" stroke-width="1.1"/>
<path d="M155.5 59 L158 61.5 L163 56" fill="none" stroke="#c6c6c6" stroke-width="1.5"/>
<!-- Create new template -->
<path d="M238 47.5 H248 L251 50.5 V64.5 H238 Z" fill="#f4f4f4" stroke="#c6c6c6" stroke-width="1.1"/>
<path d="M240 51 H247 M240 54 H247 M243 50 V56" stroke="#c6c6c6" stroke-width="0.9"/>
<rect x="239" y="57" width="9" height="7" fill="#e8e8e8" stroke="#c6c6c6" stroke-width="1"/>
<circle cx="253" cy="56" r="2" fill="none" stroke="#c6c6c6" stroke-width="1"/><path d="M249.5 64.5 L253 58.5 L256.5 64.5" fill="none" stroke="#c6c6c6" stroke-width="1"/>
<!-- Add characteristic -->
<rect x="328.5" y="48.5" width="17" height="16" fill="none" stroke="#c6c6c6" stroke-width="1.1" stroke-dasharray="2 1.5"/>
<path d="M330 49 V58 L332.5 55.5 L334.5 59 L336 58 L334 54.5 L337.5 54 Z" fill="#f4f4f4" stroke="#c6c6c6" stroke-width="0.9"/>
<path d="M334 63 L344 53 M334 63 H338 M334 63 V59 M344 53 H340 M344 53 V57" fill="none" stroke="#c6c6c6" stroke-width="1.3"/>
<!-- Add/Edit balloons -->
<path d="M411 47 V53 M408 50 H414 M409 48 L413 52 M413 48 L409 52" stroke="#c6c6c6" stroke-width="0.8"/>
<circle cx="413.5" cy="59" r="3.6" fill="#f6f6f6" stroke="#c6c6c6" stroke-width="1"/>
<circle cx="418.5" cy="57" r="3.6" fill="#f6f6f6" stroke="#c6c6c6" stroke-width="1"/>
<circle cx="422.5" cy="55.5" r="3.6" fill="#f6f6f6" stroke="#c6c6c6" stroke-width="1"/>
<!-- Remove balloons -->
<circle cx="475.5" cy="55.5" r="4" fill="#fff" stroke="#222" stroke-width="1.2"/>
<circle cx="480.5" cy="53.5" r="4" fill="#fff" stroke="#222" stroke-width="1.2"/>
<circle cx="484.5" cy="51.5" r="4" fill="#fff" stroke="#222" stroke-width="1.2"/>
<path d="M474.5 54 V58 M479.5 52 V56 M483.5 50 V54" stroke="#111" stroke-width="1.1"/>
<path d="M481 59.5 L487 65 M487 59.5 L481 65" stroke="#d61a10" stroke-width="1.8"/>
<!-- Select balloons -->
<circle cx="535.5" cy="55.5" r="4" fill="#fff" stroke="#222" stroke-width="1.2"/>
<circle cx="540.5" cy="53.5" r="4" fill="#fff" stroke="#222" stroke-width="1.2"/>
<circle cx="544.5" cy="51.5" r="4" fill="#fff" stroke="#222" stroke-width="1.2"/>
<path d="M534.5 54 V58 M539.5 52 V56" stroke="#111" stroke-width="1.1"/>
<path d="M542 53 V63 L544.5 60.5 L546.5 64.5 L548 63.5 L546 59.5 L549 59.5 Z" fill="#fff" stroke="#222" stroke-width="1"/>
<!-- Balloon sequence -->
<path d="M597 48 H608 L613 53 V64.5 H597 Z" fill="#f4f4f4" stroke="#c6c6c6" stroke-width="1"/>
<circle cx="600.5" cy="55" r="3.4" fill="#f6f6f6" stroke="#c6c6c6" stroke-width="1"/><circle cx="604.5" cy="61" r="3.4" fill="#f6f6f6" stroke="#c6c6c6" stroke-width="1"/><circle cx="609.5" cy="57" r="3.4" fill="#f6f6f6" stroke="#c6c6c6" stroke-width="1"/>
<!-- Update inspection project -->
<rect x="694.5" y="48" width="12" height="16" fill="#f4f4f4" stroke="#c6c6c6" stroke-width="1.1"/>
<path d="M696 52 H705 M696 55 H705 M696 58 H705 M699 50 V62" stroke="#c6c6c6" stroke-width="0.8"/>
<rect x="705" y="47" width="6.5" height="13" rx="3" fill="#c6c6c6"/>
<path d="M698 60 L701 63 L705 59" fill="none" stroke="#c6c6c6" stroke-width="1.2"/>
<!-- Launch template editor -->
<rect x="810.5" y="49" width="13" height="15.5" fill="#fff" stroke="#222" stroke-width="1.2"/>
<path d="M812 52 H822 M812 55 H822 M812 58 H822 M812 61 H822 M815 50 V64 M818 50 V64" stroke="#666" stroke-width="0.7"/>
<path d="M818 48.5 C822 47 826 49 826.5 53" fill="none" stroke="#1f9a1f" stroke-width="2"/><path d="M823 52 L829.5 52 L826 57 Z" fill="#1f9a1f"/>
<!-- Edit inspection methods -->
<path d="M918 49.5 H923 M923 47.5 H930 V52 H923 Z" fill="#f2f2f2" stroke="#333" stroke-width="1"/><path d="M917 49.5 H919" stroke="#e02020" stroke-width="1.5"/>
<path d="M919 65 L921 59 L931 49.5 L934 52.5 L924 62 Z" fill="#f3c623" stroke="#333" stroke-width="1"/><path d="M931 49.5 L934 52.5 L935 51 L932.5 48.5 Z" fill="#e03030"/>
<!-- Edit operations -->
<path d="M1007 55 C1007 49 1012 47 1016 48.5" fill="none" stroke="#2a8f2a" stroke-width="2.8"/><path d="M1014 45.5 L1019 49 L1013.5 52 Z" fill="#2a8f2a"/>
<path d="M1011 61 L1006 60.5 L1008 65 Z" fill="#2a8f2a"/><path d="M1006 59 C1008 62 1010 63 1012 63" fill="none" stroke="#2a8f2a" stroke-width="2.5"/>
<path d="M1009 65 L1011 59 L1020 50 L1023 53 L1014 62 Z" fill="#f3c623" stroke="#333" stroke-width="1"/><path d="M1020 50 L1023 53 L1024 51.5 L1021.5 49 Z" fill="#e03030"/>
<!-- Edit vendors -->
<path d="M1075 48 H1087 L1089 50 V64.5 H1075 Z" fill="#fff" stroke="#222" stroke-width="1.1"/>
<path d="M1077 52 H1086 M1077 55 H1086 M1077 58 H1083 M1077 61 H1081" stroke="#555" stroke-width="0.8"/>
<path d="M1079 65 L1081 59 L1089 51 L1092 54 L1084 62 Z" fill="#f3c623" stroke="#333" stroke-width="1"/><path d="M1089 51 L1092 54 L1093 52.5 L1090.5 50 Z" fill="#e03030"/>
<!-- export icons -->
<g fill="#f3f3f3" stroke="#c6c6c6" stroke-width="1">
<path d="M1123 46.5 H1132 L1136 50.5 V63 H1123 Z"/><rect x="1124" y="56" width="12" height="6"/>
<path d="M1123 72 H1132 L1136 76 V88.5 H1123 Z"/><rect x="1128" y="81" width="8" height="7"/>
<path d="M1122 99 L1128 97 L1135 99 V107 L1128 110 L1122 107 Z"/><circle cx="1131" cy="107" r="2.5"/>
<path d="M1420 46.5 H1429 L1433 50.5 V63 H1420 Z"/><rect x="1421" y="56" width="12" height="6"/>
<path d="M1420 72 H1429 L1433 76 V88.5 H1420 Z"/>
</g>
<path d="M1119 51.5 H1127 M1124 49 L1127 51.5 L1124 54 M1119 77 H1127 M1124 74.5 L1127 77 L1124 79.5 M1119 104 H1127 M1124 101.5 L1127 104 L1124 106.5 M1416 51.5 H1424 M1421 49 L1424 51.5 L1421 54" stroke="#bdbdbd" stroke-width="1.8" fill="none"/>
<text x="1424.5" y="85" font-family="Liberation Serif" font-size="11" fill="#c6c6c6">e</text>
<path d="M1564 52 H1568 V63 H1564 Z M1568 54 C1572 51 1575 53 1575 56 V63 H1571 V57 C1571 56 1569 56 1568 58 Z M1577 52 H1581 V63 H1577 Z" fill="#c6c6c6"/><circle cx="1579" cy="48.5" r="2" fill="#c6c6c6"/>
</svg>
<div class="a" style="left:0px;top:150px;width:272px;height:828px;background:#f7f7f7;"></div>
<div class="a" style="left:272px;top:150px;width:1px;height:375px;background:#8c8c8c;"></div>
<div class="a" style="left:272px;top:573px;width:1px;height:405px;background:#8c8c8c;"></div>
<div class="a" style="left:272px;top:525px;width:12px;height:1px;background:#8c8c8c;"></div>
<div class="a" style="left:283px;top:525px;width:1px;height:49px;background:#8c8c8c;"></div>
<div class="a" style="left:272px;top:573px;width:12px;height:1px;background:#8c8c8c;"></div>
<div class="a" style="left:273px;top:526px;width:10px;height:47px;background:#f7f7f7;"></div>
<svg class="a" style="left:272px;top:544px" width="10" height="10"><circle cx="5" cy="5" r="3.3" fill="#ddd" stroke="#999" stroke-width="1"/></svg>
<div class="a" style="left:0px;top:153px;width:268px;height:1px;background:#d0d0d0;"></div>
<div class="a" style="left:0px;top:174px;width:268px;height:1px;background:#c8c8c8;"></div>
<svg class="a" style="left:130px;top:159px" width="10" height="10"><circle cx="5" cy="5" r="3.2" fill="#e4e4e4" stroke="#999" stroke-width="1"/></svg>
<div class="a" style="left:1px;top:179px;width:270px;height:26px;background:#d3d3d3;"></div>
<div class="a" style="left:1px;top:179px;width:270px;height:1px;background:#b4b4b4;"></div>
<div class="a" style="left:1px;top:204px;width:270px;height:1px;background:#a8a8a8;"></div>
<div class="a" style="left:42px;top:179px;width:40px;height:26px;background:#f7f7f7;"></div>
<div class="a" style="left:41px;top:180px;width:1px;height:25px;background:#a8a8a8;"></div>
<div class="a" style="left:81px;top:180px;width:1px;height:25px;background:#a8a8a8;"></div>
<div class="a" style="left:121px;top:180px;width:1px;height:25px;background:#a8a8a8;"></div>
<div class="a" style="left:161px;top:180px;width:1px;height:25px;background:#a8a8a8;"></div>
<div class="a" style="left:201px;top:180px;width:1px;height:25px;background:#a8a8a8;"></div>
<div class="a" style="left:226px;top:180px;width:22px;height:25px;background:#ececec;border-left:1px solid #b8b8b8;box-sizing:border-box;"></div>
<div class="a" style="left:249px;top:180px;width:22px;height:25px;background:#ececec;border-left:1px solid #b8b8b8;box-sizing:border-box;"></div>
<svg class="a" style="left:0px;top:179px" width="272" height="26" viewBox="0 179 272 26">
<rect x="54" y="184" width="16" height="16" fill="#fff" stroke="#1d4f7a" stroke-width="1.2"/><rect x="54" y="184" width="16" height="3" fill="#3a8cc8"/>
<path d="M56.5 190 H59 M56.5 193.5 H59 M56.5 197 H59" stroke="#2a7ab8" stroke-width="1.6"/><path d="M61 190 H68 M61 193.5 H68 M61 197 H68" stroke="#333" stroke-width="1"/>
<path d="M96 183 V200 M96 185 H101 M96 194 H101" fill="none" stroke="#444" stroke-width="1.2"/><rect x="101" y="182.5" width="5" height="5" fill="#fff" stroke="#444"/><rect x="101" y="192.5" width="5" height="5" fill="#fff" stroke="#444"/><rect x="103" y="187" width="5" height="5" fill="#fff" stroke="#444"/><rect x="104" y="196" width="5" height="5" fill="#fff" stroke="#444"/>
<circle cx="142" cy="192" r="6" fill="none" stroke="#111" stroke-width="1.8"/><path d="M133 192 H151 M142 183 V201" stroke="#111" stroke-width="1.8"/>
<circle cx="182" cy="191.5" r="9" fill="#e6b800"/><path d="M182 191.5 L173 191.5 A9 9 0 0 1 182 182.5 Z" fill="#3a7fd0"/><path d="M182 191.5 L182 182.5 A9 9 0 0 1 191 191.5 Z" fill="#d42a1c"/><path d="M182 191.5 L173 191.5 A9 9 0 0 0 182 200.5 Z" fill="#2aa63a"/><ellipse cx="186" cy="188" rx="2.5" ry="4" fill="#222" transform="rotate(-30 186 188)"/>
<path d="M212 184 H219 L225 189 V196 H218 L212 191 Z" fill="#9ccbe6" stroke="#2f6f98" stroke-width="0.9"/><path d="M212 184 L218 189 H225 M218 189 V196 M215 184 L221.5 189 M212 187.5 L218 192.5" fill="none" stroke="#2f6f98" stroke-width="0.8"/><path d="M212 191 L218 196 V201 L212 196 Z" fill="#aaa"/><path d="M218 196 H225 V201 H218 Z" fill="#fff" stroke="#999" stroke-width="0.6"/>
<path d="M240 189 L236 192 L240 195 Z" fill="#111"/><path d="M259 189 L263 192 L259 195 Z" fill="#111"/>
</svg>
<svg class="a" style="left:12.9px;top:181.9px" width="18" height="22" viewBox="0 0 18 22"><path d="M7.22,1.10 L11.24,3.41 L5.12,6.93 L1.10,4.62 Z" fill="#fbe487" stroke="#6b5200" stroke-width="0.99" stroke-linejoin="round"/><path d="M11.24,3.41 L5.12,6.93 L5.12,12.21 L11.24,8.69 Z" fill="#f2c22a" stroke="#6b5200" stroke-width="0.99" stroke-linejoin="round"/><path d="M11.24,8.69 L16.79,11.88 L10.67,15.40 L5.12,12.21 Z" fill="#fbe487" stroke="#6b5200" stroke-width="0.99" stroke-linejoin="round"/><path d="M16.79,11.88 L10.67,15.40 L10.67,20.24 L16.79,16.72 Z" fill="#f2c22a" stroke="#6b5200" stroke-width="0.99" stroke-linejoin="round"/><path d="M1.10,14.74 L10.67,20.24 L10.67,15.40 L5.12,12.21 L5.12,6.93 L1.10,4.62 Z" fill="#e9b300" stroke="#6b5200" stroke-width="0.99" stroke-linejoin="round"/></svg>
<svg class="a" style="left:11px;top:212px" width="22" height="22" viewBox="0 0 22 22">
<path d="M7 1.5 H15 V5 H12.5 V7.5 H9.5 V5 H7 Z" fill="#fff" stroke="#333" stroke-width="1.1"/>
<path d="M7 20.5 H15 V17 H12.5 V14.5 H9.5 V17 H7 Z" fill="#fff" stroke="#333" stroke-width="1.1"/>
<path d="M20.5 7 V15 H17 V12.5 H14.5 V9.5 H17 V7 Z" fill="#fff" stroke="#333" stroke-width="1.1"/>
<path d="M1.5 7 V15 H5 V12.5 H7.5 V9.5 H5 V7 Z" fill="#3a8cc8" stroke="#1d4f7a" stroke-width="1.1"/>
</svg>
<div class="t" style="left:40.1px;top:217.5px;font-size:14.54px;color:#111;font-weight:bold;">CirPattern1</div>
<svg class="a" style="left:240px;top:216px" width="16" height="16"><circle cx="8" cy="7.5" r="6.7" fill="#fff" stroke="#333" stroke-width="1.1"/><text x="8" y="12" text-anchor="middle" font-family="Liberation Sans" font-weight="bold" font-size="10.5" fill="#1b5f96">?</text></svg>
<svg class="a" style="left:9px;top:249px" width="52" height="18"><path d="M2.5 8.5 L6.5 12.5 L15 3.5" fill="none" stroke="#3a9a1a" stroke-width="2.6"/><path d="M37.5 4 L47.5 13.5 M47.5 4 L37.5 13.5" stroke="#e01010" stroke-width="2"/></svg>
<div class="a" style="left:5px;top:281px;width:260px;height:1px;background:#b0b0b0;"></div>
<div class="a" style="left:5px;top:490px;width:260px;height:1px;background:#b0b0b0;"></div>
<div class="a" style="left:5px;top:526px;width:260px;height:1px;background:#b0b0b0;"></div>
<div class="a" style="left:5px;top:697px;width:260px;height:1px;background:#b0b0b0;"></div>
<div class="a" style="left:5px;top:733px;width:260px;height:1px;background:#b0b0b0;"></div>
<div class="a" style="left:5px;top:769px;width:260px;height:1px;background:#b0b0b0;"></div>
<div class="a" style="left:5px;top:914px;width:260px;height:1px;background:#b0b0b0;"></div>
<div class="t" style="left:9.5px;top:292.7px;font-size:12.85px;color:#333;font-weight:bold;">Direction 1</div>
<svg class="a" style="left:0;top:0;overflow:visible" width="1" height="1"><path d="M252 299.5 L257 294.5 L262 299.5" fill="none" stroke="#555" stroke-width="1.6"/></svg>
<div class="a" style="left:9px;top:313px;width:30px;height:30px;background:#f7f7f7;border:1px solid #9a9a9a;box-sizing:border-box;"></div>
<svg class="a" style="left:12px;top:316px" width="24" height="24"><path d="M5 13 A7 7 0 0 1 18 9" fill="none" stroke="#2a6f9e" stroke-width="2"/><path d="M15 7 L20 10.5 L21 4.5 Z" fill="#2a6f9e"/><path d="M19 13 A7 7 0 0 1 6 16" fill="none" stroke="#cfcfcf" stroke-width="2"/></svg>
<div class="a" style="left:41px;top:313px;width:212px;height:34px;background:#fff;border:1px solid #8a93b0;box-sizing:border-box;"></div>
<div class="t" style="left:46.4px;top:319.0px;font-size:13.0px;color:#111;">Edge&lt;1&gt;</div>
<svg class="a" style="left:42px;top:357px" width="16" height="16"><circle cx="8" cy="8" r="7.3" fill="#f4f4f4" stroke="#4d4d4d" stroke-width="1"/></svg>
<div class="t" style="left:61.3px;top:359.7px;font-size:12.7px;color:#111;">Instance spacing</div>
<svg class="a" style="left:42px;top:386px" width="16" height="16"><circle cx="8" cy="8" r="5.6" fill="#fff" stroke="#0a5fc4" stroke-width="4.8"/></svg>
<div class="t" style="left:61.3px;top:388.5px;font-size:12.7px;color:#111;">Equal spacing</div>
<svg class="a" style="left:14px;top:417px" width="20" height="20"><path d="M1.5 1 V18.5 H18.5" fill="none" stroke="#1d6a96" stroke-width="1.5"/><path d="M5 6 C9 4 13 8 12 14" fill="none" stroke="#111" stroke-width="1.6"/><path d="M9 12 L12 16 L15 12 Z M3 6.5 L7 4 L7 8.5 Z" fill="#111"/><text x="15" y="8" font-family="Liberation Sans" font-size="7" fill="#111">A</text></svg>
<div class="a" style="left:41px;top:415px;width:209px;height:26px;background:#fff;border:1px solid #b4b4b4;box-sizing:border-box;"></div>
<div class="t" style="left:43.3px;top:421.6px;font-size:13.2px;color:#111;">360.00deg</div>
<div class="a" style="left:227px;top:417px;width:21px;height:22px;background:#ececec;border:1px solid #c8c8c8;box-sizing:border-box;"></div>
<div class="a" style="left:227px;top:427px;width:21px;height:2px;background:#c8c8c8;"></div>
<svg class="a" style="left:227px;top:415px" width="21" height="26"><path d="M7 9 H14 L10.5 5.5 Z M7 17.5 H14 L10.5 21 Z" fill="#111"/></svg>
<svg class="a" style="left:14px;top:456px" width="20" height="20" viewBox="0 0 20 20">
<g fill="#2a6f9e"><circle cx="9" cy="2" r="1.6"/><circle cx="14" cy="4" r="1.6"/><circle cx="17" cy="9" r="1.6"/><circle cx="15" cy="14" r="1.6"/><circle cx="9" cy="17" r="1.6"/><circle cx="4" cy="14" r="1.6"/><circle cx="2" cy="9" r="1.6"/></g><circle cx="4" cy="4" r="1.5" fill="none" stroke="#333" stroke-width="0.8"/>
<path d="M7 6 L6 13 M11 6 L10 13 M5 8 H13 M5 11 H13" stroke="#111" stroke-width="1.2"/></svg>
<div class="a" style="left:41px;top:453px;width:209px;height:26px;background:#fff;border:1px solid #b4b4b4;box-sizing:border-box;"></div>
<div class="t" style="left:43.3px;top:459.6px;font-size:13.2px;color:#111;">53</div>
<div class="a" style="left:227px;top:455px;width:21px;height:22px;background:#ececec;border:1px solid #c8c8c8;box-sizing:border-box;"></div>
<div class="a" style="left:227px;top:465px;width:21px;height:2px;background:#c8c8c8;"></div>
<svg class="a" style="left:227px;top:453px" width="21" height="26"><path d="M7 9 H14 L10.5 5.5 Z M7 17.5 H14 L10.5 21 Z" fill="#111"/></svg>
<div class="a" style="left:9px;top:498px;width:15px;height:15px;box-sizing:border-box;border:1px solid #555;border-radius:3px;background:#f7f7f7"></div>
<div class="t" style="left:28.7px;top:501.7px;font-size:12.85px;color:#333;font-weight:bold;">Direction 2</div>
<svg class="a" style="left:0;top:0;overflow:visible" width="1" height="1"><path d="M252 504 L257 509 L262 504" fill="none" stroke="#555" stroke-width="1.6"/></svg>
<div class="a" style="left:9px;top:534px;width:15px;height:15px;background:#0a5fc4;border-radius:3px;"></div><svg class="a" style="left:9px;top:534px" width="15" height="15" viewBox="0 0 15 15"><path d="M4 7.8 L6.5 10.2 L11 5.2" fill="none" stroke="#fff" stroke-width="1.2"/></svg>
<div class="t" style="left:27.7px;top:538.1px;font-size:12.35px;color:#333;font-weight:bold;">Features and Faces</div>
<svg class="a" style="left:0;top:0;overflow:visible" width="1" height="1"><path d="M252 544 L257 539 L262 544" fill="none" stroke="#555" stroke-width="1.6"/></svg>
<svg class="a" style="left:14px;top:562px" width="22" height="22" viewBox="0 0 22 22"><path d="M3 10 C3 5 6 3 10 3 L15 3 L18 6 L18 9" fill="#fff" stroke="#333" stroke-width="1"/><path d="M3 10 V16 L6 19 L9 19" fill="#cfe3f0" stroke="#333" stroke-width="1"/><path d="M9 10 L13 8 L18 10 V16 L13 19 L9 17 Z" fill="#4aa0d0" stroke="#222" stroke-width="1"/><path d="M9 10 L13 12 L18 10 M13 12 V19" fill="none" stroke="#222" stroke-width="0.8"/></svg>
<div class="a" style="left:42px;top:558px;width:207px;height:42px;background:#cde4f7;border:2px solid #5aaeef;box-sizing:border-box;"></div>
<div class="t" style="left:47.3px;top:565.2px;font-size:12.5px;color:#111;">Boss-Extrude2</div>
<svg class="a" style="left:140px;top:600px" width="10" height="10"><circle cx="5" cy="4.5" r="3" fill="#ddd" stroke="#999" stroke-width="1"/></svg>
<svg class="a" style="left:14px;top:620px" width="22" height="22" viewBox="0 0 22 22"><path d="M3 5.5 L10 2.5 L17 5 V15 L10 18.5 L3 16 Z" fill="#fff" stroke="#222" stroke-width="1.1"/><path d="M8 8 L17 5 V15 L9 18.5 Z" fill="#4aa0d0" stroke="#222" stroke-width="1.1"/></svg>
<div class="a" style="left:42px;top:616px;width:207px;height:63px;background:#fff;border:1px solid #8a93b0;box-sizing:border-box;"></div>
<svg class="a" style="left:140px;top:679px" width="10" height="10"><circle cx="5" cy="4.5" r="3" fill="#ddd" stroke="#999" stroke-width="1"/></svg>
<div class="a" style="left:9px;top:705px;width:15px;height:15px;box-sizing:border-box;border:1px solid #555;border-radius:3px;background:#f7f7f7"></div>
<div class="t" style="left:28.5px;top:708.7px;font-size:12.85px;color:#333;font-weight:bold;">Bodies</div>
<svg class="a" style="left:0;top:0;overflow:visible" width="1" height="1"><path d="M252 713 L257 718 L262 713" fill="none" stroke="#555" stroke-width="1.6"/></svg>
<div class="t" style="left:9.2px;top:744.3px;font-size:12.85px;color:#333;font-weight:bold;">Instances to Skip</div>
<svg class="a" style="left:0;top:0;overflow:visible" width="1" height="1"><path d="M252 748 L257 753 L262 748" fill="none" stroke="#555" stroke-width="1.6"/></svg>
<div class="t" style="left:9.2px;top:780.4px;font-size:12.85px;color:#333;font-weight:bold;">Options</div>
<svg class="a" style="left:0;top:0;overflow:visible" width="1" height="1"><path d="M252 788 L257 783 L262 788" fill="none" stroke="#555" stroke-width="1.6"/></svg>
<div class="a" style="left:44px;top:803px;width:15px;height:15px;box-sizing:border-box;border:1px solid #555;border-radius:3px;background:#f7f7f7"></div>
<div class="t" style="left:63.8px;top:805.0px;font-size:13.25px;color:#111;">Geometry pattern</div>
<div class="a" style="left:44px;top:831px;width:15px;height:15px;background:#0a5fc4;border-radius:3px;"></div><svg class="a" style="left:44px;top:831px" width="15" height="15" viewBox="0 0 15 15"><path d="M4 7.8 L6.5 10.2 L11 5.2" fill="none" stroke="#fff" stroke-width="1.2"/></svg>
<div class="t" style="left:63.8px;top:832.0px;font-size:13.25px;color:#111;">Propagate visual properties</div>
<svg class="a" style="left:44px;top:860px" width="16" height="16"><circle cx="8" cy="8" r="7.3" fill="#f4f4f4" stroke="#4d4d4d" stroke-width="1"/></svg>
<div class="t" style="left:63.8px;top:861.8px;font-size:13.25px;color:#111;">Full preview</div>
<svg class="a" style="left:44px;top:886px" width="16" height="16"><circle cx="8" cy="8" r="5.6" fill="#fff" stroke="#0a5fc4" stroke-width="4.8"/></svg>
<div class="t" style="left:63.8px;top:888.0px;font-size:13.25px;color:#111;">Partial preview</div>
<div class="a" style="left:9px;top:922px;width:15px;height:15px;box-sizing:border-box;border:1px solid #555;border-radius:3px;background:#f7f7f7"></div>
<div class="t" style="left:28.2px;top:925.9px;font-size:12.85px;color:#333;font-weight:bold;">Instances to Vary</div>
<svg class="a" style="left:0;top:0;overflow:visible" width="1" height="1"><path d="M252 928 L257 933 L262 928" fill="none" stroke="#555" stroke-width="1.6"/></svg>
<div class="a" style="left:0px;top:975px;width:270px;height:1px;background:#c8c8c8;"></div>
<div class="a" style="left:0px;top:978px;width:1919px;height:20px;background:#f7f7f7;"></div>
<div class="a" style="left:0px;top:978px;width:1919px;height:1px;background:#9a9a9a;"></div>
<div class="a" style="left:0px;top:998px;width:1919px;height:1px;background:#9a9a9a;"></div>
<div class="a" style="left:0px;top:979px;width:2px;height:19px;background:#8fb0b0;"></div>
<div class="a" style="left:27px;top:979px;width:81px;height:19px;background:#a3a3bd;border-top:2px solid #222;box-sizing:border-box;"></div>
<div class="a" style="left:47px;top:980px;width:1px;height:18px;background:#7a7a96;"></div>
<div class="a" style="left:66px;top:980px;width:1px;height:18px;background:#7a7a96;"></div>
<div class="a" style="left:86px;top:980px;width:1px;height:18px;background:#7a7a96;"></div>
<svg class="a" style="left:27px;top:979px" width="81" height="20" viewBox="27 978 81 20">
<g fill="#7f7f99"><path d="M33 982 H35 V994 H33 Z M42 982 L35 988 L42 994 Z M58 982 L51 988 L58 994 Z M72 982 L79 988 L72 994 Z M92 982 L99 988 L92 994 Z M99 982 H101 V994 H99 Z"/></g></svg>
<div class="a" style="left:108px;top:979px;width:76px;height:19px;background:#f7f7f7;"></div>
<div class="a" style="left:183px;top:979px;width:1px;height:19px;background:#9a9a9a;"></div>
<div class="a" style="left:184px;top:979px;width:88px;height:19px;background:#d5d5d5;"></div>
<div class="a" style="left:272px;top:979px;width:1px;height:19px;background:#9a9a9a;"></div>
<div class="a" style="left:273px;top:979px;width:143px;height:19px;background:#d5d5d5;"></div>
<div class="a" style="left:416px;top:979px;width:1px;height:19px;background:#9a9a9a;"></div>
<div class="a" style="left:0px;top:978px;width:1919px;height:1px;background:#9a9a9a;"></div>
<div class="a" style="left:0px;top:998px;width:1919px;height:1px;background:#9a9a9a;"></div>
<div class="t" style="left:123.8px;top:980.9px;font-size:16.4px;color:#111;font-weight:bold;">Model</div>
<div class="t" style="left:195.6px;top:981.5px;font-size:15.7px;color:#222;">3D Views</div>
<div class="t" style="left:286.7px;top:981.3px;font-size:15.9px;color:#222;">Motion Study 1</div>
<div class="a" style="left:0px;top:999px;width:1919px;height:21px;background:#f7f7f7;"></div>
<div class="t" style="left:1.2px;top:1002.8px;font-size:15.08px;color:#111;">Select field in callout to edit array contents or click on arrow to reverse direction</div>
<div class="t" style="left:1261.2px;top:1003.9px;font-size:14.67px;color:#222;">Diameter: 124.5mm</div>
<div class="t" style="left:1399.2px;top:1003.9px;font-size:14.67px;color:#222;">Center: 0mm,-35mm,0mm</div>
<div class="t" style="left:1597.4px;top:1003.9px;font-size:14.62px;color:#222;">Editing Part</div>
<div class="t" style="left:1799.0px;top:1003.9px;font-size:14.6px;color:#9a9a9a;">MMGS</div>
<svg class="a" style="left:1866px;top:1006px" width="10" height="8"><path d="M2 5 H8 L5 2 Z" fill="#555"/></svg>
<svg class="a" style="left:1898px;top:1000px" width="20" height="18" viewBox="0 0 20 18"><path d="M3 6 L10 2 L17 5 L17 10 L10 15 L3 11 Z" fill="#f4f4f4" stroke="#333" stroke-width="1"/><path d="M3 6 L10 10 L17 5 M10 10 V15" fill="none" stroke="#333" stroke-width="1"/></svg>
</body></html>
